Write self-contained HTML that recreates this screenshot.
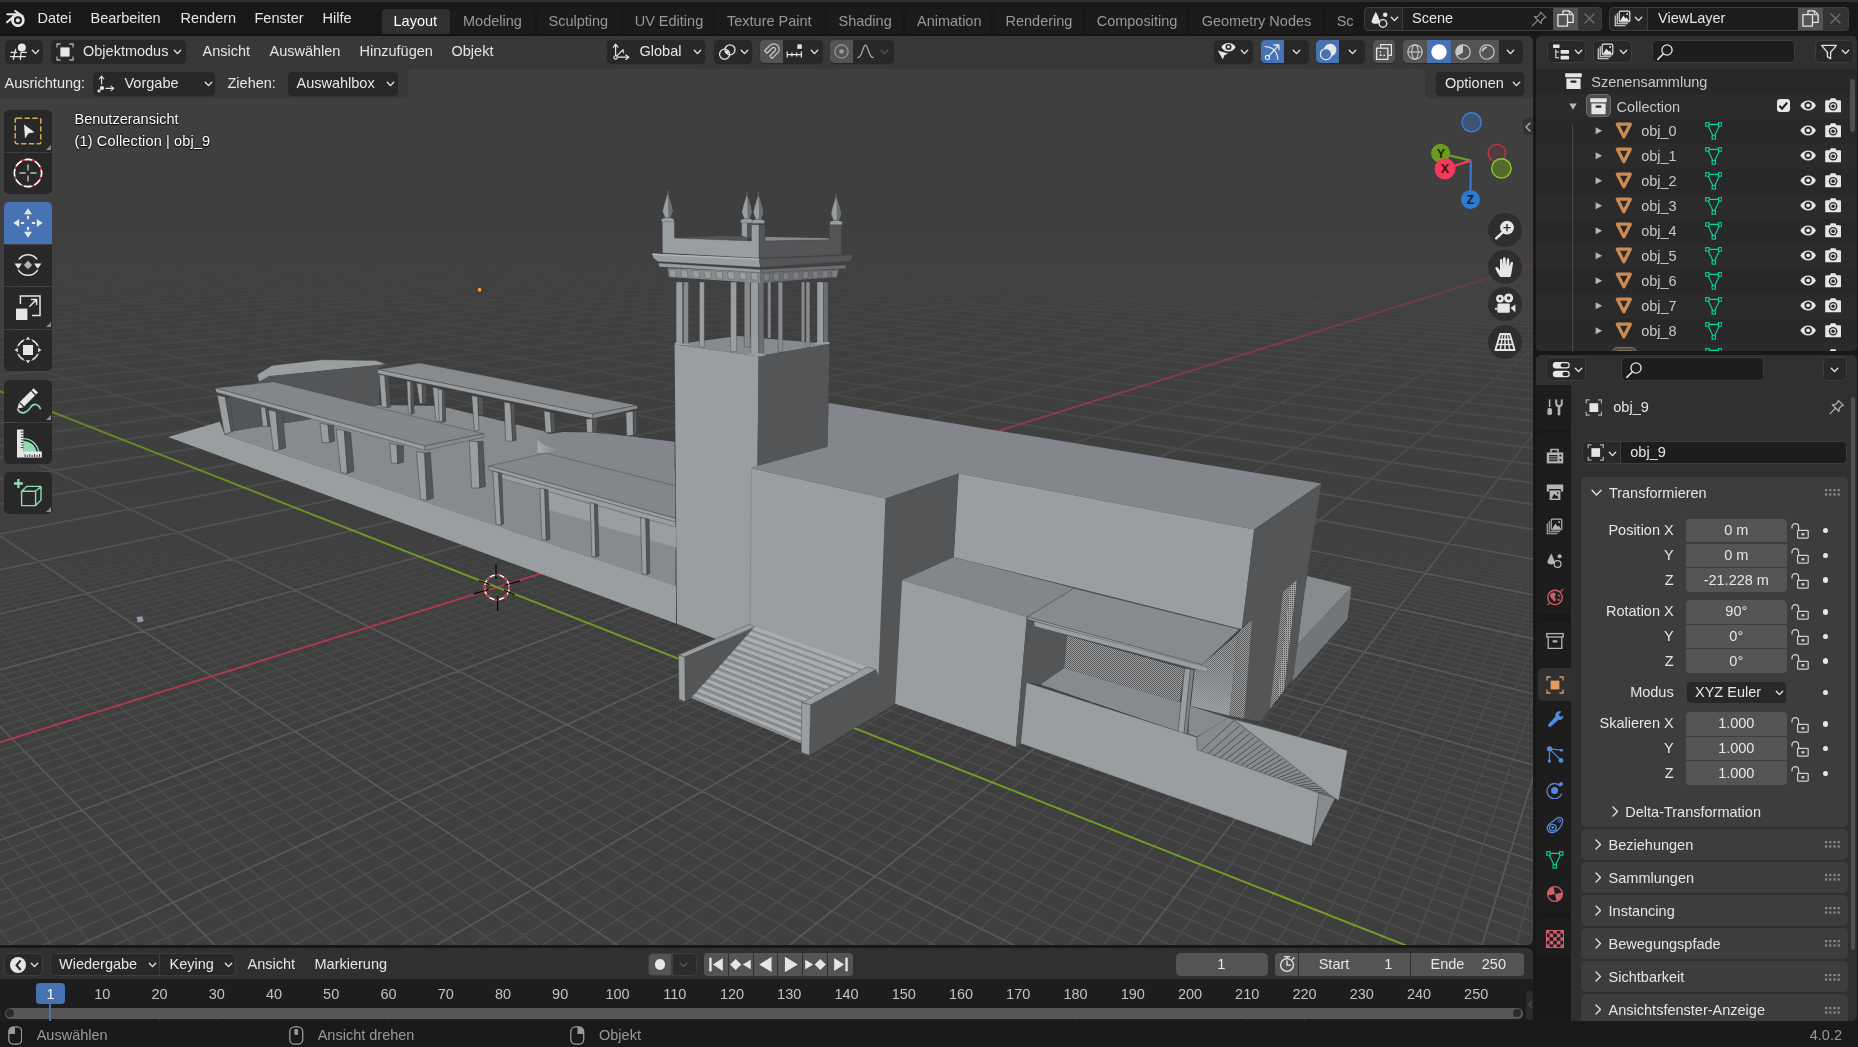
<!DOCTYPE html>
<html><head><meta charset="utf-8"><title>Blender</title>
<style>
html,body{margin:0;padding:0;overflow:hidden;}
body{width:1858px;height:1047px;background:#181818;overflow:hidden;position:relative;font-family:"Liberation Sans",sans-serif;font-size:14.5px;}
body div, body svg{position:absolute;}
</style></head><body>
<div style="left:0px;top:0px;width:1858px;height:2px;background:#2c3036;border-radius:0px;"></div>
<div style="left:0px;top:2px;width:1858px;height:34px;background:#181818;border-radius:0px;"></div>
<div style="left:0px;top:34px;width:1533px;height:2px;background:#131313;border-radius:0px;"></div>
<svg style="left:5.5px;top:10px" width="19" height="17" viewBox="0 0 19 17"><path d="M1.4 4.3H13.5M9.3 1L16.6 6.2M1.1 12.2L7.4 6.6" fill="none" stroke="#e6e6e6" stroke-width="2.1" stroke-linecap="round"/><circle cx="11.9" cy="10.3" r="5.4" fill="#181818" stroke="#e6e6e6" stroke-width="2.8"/><circle cx="11.9" cy="10.3" r="2.1" fill="#e6e6e6"/></svg>
<div style="left:37.5px;top:8px;line-height:20px;height:20px;color:#e6e6e6;white-space:pre;opacity:.999;">Datei</div>
<div style="left:90.5px;top:8px;line-height:20px;height:20px;color:#e6e6e6;white-space:pre;opacity:.999;">Bearbeiten</div>
<div style="left:180.5px;top:8px;line-height:20px;height:20px;color:#e6e6e6;white-space:pre;opacity:.999;">Rendern</div>
<div style="left:254.5px;top:8px;line-height:20px;height:20px;color:#e6e6e6;white-space:pre;opacity:.999;">Fenster</div>
<div style="left:322.5px;top:8px;line-height:20px;height:20px;color:#e6e6e6;white-space:pre;opacity:.999;">Hilfe</div>
<div style="left:382.0px;top:9px;width:67.5px;height:25px;background:#303030;border-radius:4px 4px 0 0;"></div>
<div style="left:393.5px;top:11px;line-height:20px;height:20px;color:#ffffff;white-space:pre;opacity:.999;">Layout</div>
<div style="left:452.0px;top:9px;width:81.5px;height:25px;background:#1b1b1b;border-radius:4px 4px 0 0;"></div>
<div style="left:463px;top:11px;line-height:20px;height:20px;color:#989898;white-space:pre;opacity:.999;">Modeling</div>
<div style="left:537.5px;top:9px;width:82.0px;height:25px;background:#1b1b1b;border-radius:4px 4px 0 0;"></div>
<div style="left:548.5px;top:11px;line-height:20px;height:20px;color:#989898;white-space:pre;opacity:.999;">Sculpting</div>
<div style="left:623.7px;top:9px;width:87.79999999999995px;height:25px;background:#1b1b1b;border-radius:4px 4px 0 0;"></div>
<div style="left:634.7px;top:11px;line-height:20px;height:20px;color:#989898;white-space:pre;opacity:.999;">UV Editing</div>
<div style="left:716.0px;top:9px;width:107.20000000000005px;height:25px;background:#1b1b1b;border-radius:4px 4px 0 0;"></div>
<div style="left:727px;top:11px;line-height:20px;height:20px;color:#989898;white-space:pre;opacity:.999;">Texture Paint</div>
<div style="left:827.5px;top:9px;width:74.5px;height:25px;background:#1b1b1b;border-radius:4px 4px 0 0;"></div>
<div style="left:838.5px;top:11px;line-height:20px;height:20px;color:#989898;white-space:pre;opacity:.999;">Shading</div>
<div style="left:906.0px;top:9px;width:84.20000000000005px;height:25px;background:#1b1b1b;border-radius:4px 4px 0 0;"></div>
<div style="left:917px;top:11px;line-height:20px;height:20px;color:#989898;white-space:pre;opacity:.999;">Animation</div>
<div style="left:994.5px;top:9px;width:87.0px;height:25px;background:#1b1b1b;border-radius:4px 4px 0 0;"></div>
<div style="left:1005.5px;top:11px;line-height:20px;height:20px;color:#989898;white-space:pre;opacity:.999;">Rendering</div>
<div style="left:1085.7px;top:9px;width:100.79999999999995px;height:25px;background:#1b1b1b;border-radius:4px 4px 0 0;"></div>
<div style="left:1096.7px;top:11px;line-height:20px;height:20px;color:#989898;white-space:pre;opacity:.999;">Compositing</div>
<div style="left:1190.7px;top:9px;width:130.79999999999995px;height:25px;background:#1b1b1b;border-radius:4px 4px 0 0;"></div>
<div style="left:1201.7px;top:11px;line-height:20px;height:20px;color:#989898;white-space:pre;opacity:.999;">Geometry Nodes</div>
<div style="left:1325.7px;top:9px;width:84.79999999999995px;height:25px;background:#1b1b1b;border-radius:4px 4px 0 0;"></div>
<div style="left:1336.7px;top:11px;line-height:20px;height:20px;color:#989898;white-space:pre;opacity:.999;">Scripting</div>
<div style="left:1353px;top:2px;width:505px;height:34px;background:#181818;border-radius:0px;"></div>
<div style="left:1363.5px;top:6.5px;width:238.5px;height:24px;background:#1d1d1d;border-radius:4.5px;border:1px solid #3d3d3d;box-sizing:border-box;"></div>
<div style="left:1363.5px;top:6.5px;width:39px;height:24px;background:#262626;border-radius:4.5px 0 0 4.5px;border:1px solid #3d3d3d;box-sizing:border-box;"></div>
<svg style="left:1369.5px;top:9.5px" width="19" height="19" viewBox="0 0 17 17"><path d="M5.2 1.5C6.6 4.5 8.6 8 8.8 10.6C8.8 13 1.4 13 1.4 10.6C1.6 8 3.8 4.5 5.2 1.5Z" fill="#e6e6e6"/><circle cx="11.6" cy="12" r="3.4" fill="#282828" stroke="#e6e6e6" stroke-width="1.3"/><circle cx="13.6" cy="4.3" r="2" fill="#e6e6e6"/></svg>
<svg style="left:1389.5px;top:15px" width="9" height="8" viewBox="0 0 9 8"><path d="M1.3 2.3L4.5 5.6L7.7 2.3" fill="none" stroke="#e6e6e6" stroke-linecap="round" stroke-linejoin="round" stroke-width="1.35"/></svg>
<div style="left:1412px;top:8px;line-height:20px;height:20px;color:#e6e6e6;white-space:pre;opacity:.999;">Scene</div>
<svg style="left:1530px;top:10px" width="18" height="18" viewBox="0 0 18 18"><path d="M10.6 2.2L15.8 7.4L13.9 8L11.4 10.5L11.3 13.6L4.4 6.7L7.5 6.6L10 4.1Z M7.8 10.2L2.2 15.8" fill="none" stroke="#8a8a8a" stroke-linecap="round" stroke-linejoin="round" stroke-width="1.2"/></svg>
<div style="left:1552.5px;top:6.5px;width:25px;height:24px;background:#545454;border-radius:0px;border-top:1px solid #3d3d3d;border-bottom:1px solid #3d3d3d;box-sizing:border-box;"></div>
<svg style="left:1556.5px;top:10px" width="17" height="17" viewBox="0 0 17 17"><path d="M6 .9H12.4L16.1 4.6V12.4H6Z" fill="none" stroke="#e6e6e6" stroke-width="1.3" stroke-linejoin="round"/><path d="M12.2 1.1V4.8H15.9" fill="none" stroke="#e6e6e6" stroke-width="1.1"/><rect x=".9" y="4.6" width="9.6" height="11.5" fill="#545454" stroke="#e6e6e6" stroke-width="1.3" stroke-linejoin="round"/></svg>
<div style="left:1577.5px;top:6.5px;width:24.5px;height:24px;background:#333333;border-radius:0 4.5px 4.5px 0;border:1px solid #3d3d3d;border-left:none;box-sizing:border-box;"></div>
<svg style="left:1584px;top:13px" width="11" height="11" viewBox="0 0 11 11"><path d="M1 1L10 10M10 1L1 10" fill="none" stroke="#6e6e6e" stroke-linecap="round" stroke-linejoin="round" stroke-width="1.4"/></svg>
<div style="left:1609px;top:6.5px;width:239.5px;height:24px;background:#1d1d1d;border-radius:4.5px;border:1px solid #3d3d3d;box-sizing:border-box;"></div>
<div style="left:1609px;top:6.5px;width:39px;height:24px;background:#262626;border-radius:4.5px 0 0 4.5px;border:1px solid #3d3d3d;box-sizing:border-box;"></div>
<svg style="left:1614px;top:10px" width="17" height="17" viewBox="0 0 17 17"><rect x="5.2" y="1.2" width="10.6" height="10.6" rx="1.2" fill="none" stroke="#e6e6e6" stroke-width="1.2"/><path d="M6 11L9.4 5.6L11.6 8.6L12.8 7.4L15 11Z" fill="#e6e6e6"/><circle cx="13.2" cy="4" r="1" fill="#e6e6e6"/><path d="M3.2 3.6V13.8H13.4M1.2 5.8V15.8H11.2" fill="none" stroke="#e6e6e6" stroke-linecap="round" stroke-linejoin="round" stroke-width="1.1"/></svg>
<svg style="left:1634px;top:15px" width="9" height="8" viewBox="0 0 9 8"><path d="M1.3 2.3L4.5 5.6L7.7 2.3" fill="none" stroke="#e6e6e6" stroke-linecap="round" stroke-linejoin="round" stroke-width="1.35"/></svg>
<div style="left:1658px;top:8px;line-height:20px;height:20px;color:#e6e6e6;white-space:pre;opacity:.999;">ViewLayer</div>
<div style="left:1798px;top:6.5px;width:25px;height:24px;background:#545454;border-radius:0px;border-top:1px solid #3d3d3d;border-bottom:1px solid #3d3d3d;box-sizing:border-box;"></div>
<svg style="left:1802px;top:10px" width="17" height="17" viewBox="0 0 17 17"><path d="M6 .9H12.4L16.1 4.6V12.4H6Z" fill="none" stroke="#e6e6e6" stroke-width="1.3" stroke-linejoin="round"/><path d="M12.2 1.1V4.8H15.9" fill="none" stroke="#e6e6e6" stroke-width="1.1"/><rect x=".9" y="4.6" width="9.6" height="11.5" fill="#545454" stroke="#e6e6e6" stroke-width="1.3" stroke-linejoin="round"/></svg>
<div style="left:1823px;top:6.5px;width:25.5px;height:24px;background:#333333;border-radius:0 4.5px 4.5px 0;border:1px solid #3d3d3d;border-left:none;box-sizing:border-box;"></div>
<svg style="left:1830px;top:13px" width="11" height="11" viewBox="0 0 11 11"><path d="M1 1L10 10M10 1L1 10" fill="none" stroke="#6e6e6e" stroke-linecap="round" stroke-linejoin="round" stroke-width="1.4"/></svg>
<div style="left:0;top:36px;width:1533px;height:909px;background:#3f3f3f;border-radius:0 6px 5px 0;overflow:hidden;">
<svg style="left:0;top:0" width="1533" height="909" viewBox="0 36 1533 909"><defs><linearGradient id="gf" x1="0" y1="455" x2="0" y2="945" gradientUnits="userSpaceOnUse"><stop offset="0.000" stop-color="#fff" stop-opacity="0"/><stop offset="0.112" stop-color="#fff" stop-opacity="0.06"/><stop offset="0.255" stop-color="#fff" stop-opacity="0.45"/><stop offset="0.500" stop-color="#fff" stop-opacity="0.85"/><stop offset="1.000" stop-color="#fff" stop-opacity="1"/></linearGradient><linearGradient id="gm" x1="0" y1="225" x2="0" y2="620" gradientUnits="userSpaceOnUse"><stop offset="0.000" stop-color="#fff" stop-opacity="0"/><stop offset="0.089" stop-color="#fff" stop-opacity="0.09"/><stop offset="0.190" stop-color="#fff" stop-opacity="0.17"/><stop offset="0.316" stop-color="#fff" stop-opacity="0.27"/><stop offset="0.443" stop-color="#fff" stop-opacity="0.38"/><stop offset="0.696" stop-color="#fff" stop-opacity="0.66"/><stop offset="1.000" stop-color="#fff" stop-opacity="1"/></linearGradient><linearGradient id="ga" x1="0" y1="215" x2="0" y2="650" gradientUnits="userSpaceOnUse"><stop offset="0.000" stop-color="#fff" stop-opacity="0"/><stop offset="0.108" stop-color="#fff" stop-opacity="0.2"/><stop offset="0.195" stop-color="#fff" stop-opacity="0.42"/><stop offset="0.425" stop-color="#fff" stop-opacity="0.68"/><stop offset="0.701" stop-color="#fff" stop-opacity="0.9"/><stop offset="1.000" stop-color="#fff" stop-opacity="1"/></linearGradient><mask id="ma" maskUnits="userSpaceOnUse" x="0" y="36" width="1533" height="909"><rect x="0" y="36" width="1533" height="909" fill="url(#ga)"/></mask><mask id="mf" maskUnits="userSpaceOnUse" x="0" y="36" width="1533" height="909"><rect x="0" y="36" width="1533" height="909" fill="url(#gf)"/></mask><mask id="mm" maskUnits="userSpaceOnUse" x="0" y="36" width="1533" height="909"><rect x="0" y="36" width="1533" height="909" fill="url(#gm)"/></mask><pattern id="st" width="2" height="2" patternUnits="userSpaceOnUse"><rect width="2" height="2" fill="#9a9fa1"/><rect width="1" height="1" fill="#58595b"/><rect x="1" y="1" width="1" height="1" fill="#58595b"/></pattern><pattern id="st2" width="2" height="2" patternUnits="userSpaceOnUse"><rect width="2" height="2" fill="#9a9fa1"/><rect width="1" height="1" fill="#4e4f51"/></pattern><linearGradient id="stg" x1="1215" y1="650" x2="1208" y2="712" gradientUnits="userSpaceOnUse"><stop offset="0" stop-color="#9a9fa1" stop-opacity="0.1"/><stop offset="1" stop-color="#9a9fa1" stop-opacity="0.9"/></linearGradient><linearGradient id="dg" x1="537" y1="0" x2="558" y2="0" gradientUnits="userSpaceOnUse"><stop offset="0" stop-color="#a6abad"/><stop offset="1" stop-color="#86898c"/></linearGradient></defs><g mask="url(#mf)"><path d="M1524.8 455.0L1535.0 456.4M1512.7 455.0L1535.0 458.0M1500.6 455.0L1535.0 459.6M1488.5 455.0L1535.0 461.3M1476.4 455.0L1535.0 463.0M1452.1 455.0L1535.0 466.5M1439.9 455.0L1535.0 468.2M1427.7 455.0L1535.0 470.0M1415.5 455.0L1535.0 471.9M1403.3 455.0L1535.0 473.7M1391.0 455.0L1535.0 475.6M1378.8 455.0L1535.0 477.5M1366.5 455.0L1535.0 479.4M1354.2 455.0L1535.0 481.3M1329.6 455.0L1535.0 485.3M1317.2 455.0L1535.0 487.3M1304.9 455.0L1535.0 489.4M1292.5 455.0L1535.0 491.5M1280.1 455.0L1535.0 493.6M1267.7 455.0L1535.0 495.8M1255.3 455.0L1535.0 498.0M1242.8 455.0L1535.0 500.2M1230.4 455.0L1535.0 502.5M1205.4 455.0L1535.0 507.1M1192.9 455.0L1535.0 509.5M1180.3 455.0L1535.0 511.9M1167.8 455.0L1535.0 514.3M1155.2 455.0L1535.0 516.8M1142.7 455.0L1535.0 519.3M1130.1 455.0L1535.0 521.9M1117.4 455.0L1535.0 524.5M1104.8 455.0L1535.0 527.1M1079.5 455.0L1535.0 532.6M1066.8 455.0L1535.0 535.4M1054.1 455.0L1535.0 538.2M1041.4 455.0L1535.0 541.1M1028.6 455.0L1535.0 544.0M1015.9 455.0L1535.0 547.0M1003.1 455.0L1535.0 550.1M990.3 455.0L1535.0 553.2M977.5 455.0L1535.0 556.3M951.9 455.0L1535.0 562.8M939.0 455.0L1535.0 566.2M926.1 455.0L1535.0 569.6M913.2 455.0L1535.0 573.0M900.3 455.0L1535.0 576.6M887.4 455.0L1535.0 580.2M874.4 455.0L1535.0 583.9M861.5 455.0L1535.0 587.6M848.5 455.0L1535.0 591.4M822.4 455.0L1535.0 599.3M809.4 455.0L1535.0 603.4M796.3 455.0L1535.0 607.5M783.3 455.0L1535.0 611.8M770.2 455.0L1535.0 616.1M757.1 455.0L1535.0 620.5M743.9 455.0L1535.0 625.0M730.8 455.0L1535.0 629.6M717.6 455.0L1535.0 634.4M691.2 455.0L1535.0 644.1M678.0 455.0L1535.0 649.2M664.8 455.0L1535.0 654.4M651.5 455.0L1535.0 659.7M638.2 455.0L1535.0 665.1M624.9 455.0L1535.0 670.6M611.6 455.0L1535.0 676.3M598.3 455.0L1535.0 682.2M584.9 455.0L1535.0 688.1M558.2 455.0L1535.0 700.6M544.7 455.0L1535.0 707.0M531.3 455.0L1535.0 713.6M517.9 455.0L1535.0 720.4M504.4 455.0L1535.0 727.4M490.9 455.0L1535.0 734.6M477.4 455.0L1535.0 742.0M463.9 455.0L1535.0 749.6M450.3 455.0L1535.0 757.4M423.2 455.0L1535.0 773.7M409.6 455.0L1535.0 782.3M396.0 455.0L1535.0 791.1M382.3 455.0L1535.0 800.1M368.7 455.0L1535.0 809.5M355.0 455.0L1535.0 819.2M341.3 455.0L1535.0 829.1M327.6 455.0L1535.0 839.4M313.8 455.0L1535.0 850.1M286.3 455.0L1535.0 872.5M272.5 455.0L1535.0 884.3M258.7 455.0L1535.0 896.5M244.8 455.0L1535.0 909.2M231.0 455.0L1535.0 922.4M217.1 455.0L1535.0 936.0M203.2 455.0L1526.4 947.0M189.3 455.0L1487.6 947.0M175.4 455.0L1448.8 947.0M147.4 455.0L1370.9 947.0M133.4 455.0L1331.9 947.0M119.4 455.0L1292.9 947.0M105.4 455.0L1253.8 947.0M91.3 455.0L1214.6 947.0M77.2 455.0L1175.4 947.0M63.1 455.0L1136.1 947.0M49.0 455.0L1096.7 947.0M34.9 455.0L1057.3 947.0M6.5 455.0L978.4 947.0M-2.0 457.9L938.8 947.0M-2.0 465.6L899.2 947.0M-2.0 473.7L859.5 947.0M-2.0 482.4L819.7 947.0M-2.0 491.5L779.9 947.0M-2.0 501.2L740.1 947.0M-2.0 511.6L700.2 947.0M-2.0 522.7L660.2 947.0M-2.0 547.3L580.1 947.0M-2.0 561.0L539.9 947.0M-2.0 575.8L499.7 947.0M-2.0 591.8L459.4 947.0M-2.0 609.2L419.1 947.0M-2.0 628.1L378.7 947.0M-2.0 648.8L338.3 947.0M-2.0 671.6L297.8 947.0M-2.0 696.7L257.2 947.0M-2.0 755.6L175.9 947.0M-2.0 790.5L135.1 947.0M-2.0 830.0L94.3 947.0M-2.0 875.0L53.5 947.0M-2.0 926.7L12.6 947.0M1515.6 947.0L1535.0 871.9M1447.0 947.0L1535.0 696.6M1412.7 947.0L1535.0 639.7M1378.3 947.0L1535.0 594.6M1343.9 947.0L1535.0 558.1M1309.4 947.0L1535.0 527.8M1274.9 947.0L1535.0 502.4M1240.3 947.0L1535.0 480.7M1205.7 947.0L1535.0 462.0M1171.1 947.0L1528.2 455.0M1101.7 947.0L1505.2 455.0M1066.9 947.0L1493.6 455.0M1032.1 947.0L1482.1 455.0M997.2 947.0L1470.5 455.0M962.3 947.0L1458.9 455.0M927.3 947.0L1447.3 455.0M892.3 947.0L1435.6 455.0M857.3 947.0L1424.0 455.0M822.2 947.0L1412.4 455.0M751.8 947.0L1389.0 455.0M716.6 947.0L1377.3 455.0M681.3 947.0L1365.6 455.0M646.0 947.0L1353.8 455.0M610.6 947.0L1342.1 455.0M575.2 947.0L1330.3 455.0M539.8 947.0L1318.6 455.0M504.3 947.0L1306.8 455.0M468.7 947.0L1295.0 455.0M397.5 947.0L1271.3 455.0M361.8 947.0L1259.4 455.0M326.0 947.0L1247.6 455.0M290.3 947.0L1235.7 455.0M254.4 947.0L1223.8 455.0M218.6 947.0L1211.9 455.0M182.6 947.0L1200.0 455.0M146.7 947.0L1188.0 455.0M110.7 947.0L1176.0 455.0M38.5 947.0L1152.1 455.0M2.3 947.0L1140.1 455.0M-2.0 933.5L1128.0 455.0M-2.0 918.7L1116.0 455.0M-2.0 904.6L1103.9 455.0M-2.0 890.9L1091.9 455.0M-2.0 877.8L1079.8 455.0M-2.0 865.1L1067.7 455.0M-2.0 852.9L1055.6 455.0M-2.0 829.8L1031.3 455.0M-2.0 818.8L1019.1 455.0M-2.0 808.2L1006.9 455.0M-2.0 797.9L994.7 455.0M-2.0 788.0L982.5 455.0M-2.0 778.4L970.3 455.0M-2.0 769.1L958.0 455.0M-2.0 760.1L945.8 455.0M-2.0 751.3L933.5 455.0M-2.0 734.6L908.9 455.0M-2.0 726.7L896.6 455.0M-2.0 718.9L884.2 455.0M-2.0 711.4L871.9 455.0M-2.0 704.0L859.5 455.0M-2.0 696.9L847.1 455.0M-2.0 690.0L834.7 455.0M-2.0 683.2L822.2 455.0M-2.0 676.7L809.8 455.0M-2.0 664.0L784.9 455.0M-2.0 658.0L772.4 455.0M-2.0 652.0L759.9 455.0M-2.0 646.3L747.3 455.0M-2.0 640.6L734.8 455.0M-2.0 635.2L722.2 455.0M-2.0 629.8L709.7 455.0M-2.0 624.6L697.1 455.0M-2.0 619.4L684.5 455.0M-2.0 609.6L659.2 455.0M-2.0 604.8L646.5 455.0M-2.0 600.1L633.9 455.0M-2.0 595.6L621.2 455.0M-2.0 591.1L608.4 455.0M-2.0 586.7L595.7 455.0M-2.0 582.5L583.0 455.0M-2.0 578.3L570.2 455.0M-2.0 574.2L557.4 455.0M-2.0 566.2L531.8 455.0M-2.0 562.4L519.0 455.0M-2.0 558.6L506.1 455.0M-2.0 554.9L493.3 455.0M-2.0 551.3L480.4 455.0M-2.0 547.8L467.5 455.0M-2.0 544.3L454.6 455.0M-2.0 540.9L441.6 455.0M-2.0 537.5L428.7 455.0M-2.0 531.0L402.7 455.0M-2.0 527.8L389.7 455.0M-2.0 524.7L376.7 455.0M-2.0 521.7L363.6 455.0M-2.0 518.7L350.6 455.0M-2.0 515.7L337.5 455.0M-2.0 512.8L324.4 455.0M-2.0 510.0L311.3 455.0M-2.0 507.2L298.2 455.0M-2.0 501.7L271.9 455.0M-2.0 499.1L258.7 455.0M-2.0 496.5L245.5 455.0M-2.0 493.9L232.2 455.0M-2.0 491.4L219.0 455.0M-2.0 488.9L205.7 455.0M-2.0 486.4L192.5 455.0M-2.0 484.0L179.2 455.0M-2.0 481.7L165.9 455.0M-2.0 477.0L139.2 455.0M-2.0 474.8L125.8 455.0M-2.0 472.6L112.4 455.0M-2.0 470.4L99.0 455.0M-2.0 468.2L85.6 455.0M-2.0 466.1L72.2 455.0M-2.0 464.0L58.7 455.0M-2.0 462.0L45.2 455.0M-2.0 459.9L31.7 455.0M-2.0 456.0L4.7 455.0" stroke="#4d4d4d" stroke-width="1.6" fill="none" opacity="1"/></g><g mask="url(#mm)"><path d="M583.4 205.0L1535.0 226.6M581.2 205.0L1535.0 226.7M579.0 205.0L1535.0 226.8M576.8 205.0L1535.0 226.9M574.6 205.0L1535.0 226.9M572.4 205.0L1535.0 227.0M570.1 205.0L1535.0 227.1M567.9 205.0L1535.0 227.2M565.6 205.0L1535.0 227.3M563.3 205.0L1535.0 227.4M561.1 205.0L1535.0 227.5M558.7 205.0L1535.0 227.6M556.4 205.0L1535.0 227.7M554.1 205.0L1535.0 227.8M551.7 205.0L1535.0 227.9M549.4 205.0L1535.0 228.0M547.0 205.0L1535.0 228.2M544.6 205.0L1535.0 228.3M542.2 205.0L1535.0 228.4M539.8 205.0L1535.0 228.5M537.4 205.0L1535.0 228.6M534.9 205.0L1535.0 228.7M532.4 205.0L1535.0 228.8M530.0 205.0L1535.0 228.9M527.5 205.0L1535.0 229.0M524.9 205.0L1535.0 229.2M522.4 205.0L1535.0 229.3M519.9 205.0L1535.0 229.4M517.3 205.0L1535.0 229.5M514.7 205.0L1535.0 229.6M512.1 205.0L1535.0 229.8M509.5 205.0L1535.0 229.9M506.9 205.0L1535.0 230.0M504.2 205.0L1535.0 230.1M501.6 205.0L1535.0 230.3M498.9 205.0L1535.0 230.4M496.2 205.0L1535.0 230.5M493.5 205.0L1535.0 230.7M490.7 205.0L1535.0 230.8M488.0 205.0L1535.0 231.0M485.2 205.0L1535.0 231.1M482.4 205.0L1535.0 231.2M479.6 205.0L1535.0 231.4M476.8 205.0L1535.0 231.5M473.9 205.0L1535.0 231.7M471.0 205.0L1535.0 231.8M468.2 205.0L1535.0 232.0M465.2 205.0L1535.0 232.1M462.3 205.0L1535.0 232.3M459.4 205.0L1535.0 232.4M456.4 205.0L1535.0 232.6M453.4 205.0L1535.0 232.7M450.4 205.0L1535.0 232.9M447.4 205.0L1535.0 233.1M444.3 205.0L1535.0 233.2M441.3 205.0L1535.0 233.4M438.2 205.0L1535.0 233.6M435.0 205.0L1535.0 233.7M431.9 205.0L1535.0 233.9M428.7 205.0L1535.0 234.1M425.6 205.0L1535.0 234.3M422.3 205.0L1535.0 234.5M419.1 205.0L1535.0 234.6M415.9 205.0L1535.0 234.8M412.6 205.0L1535.0 235.0M409.3 205.0L1535.0 235.2M406.0 205.0L1535.0 235.4M402.6 205.0L1535.0 235.6M399.2 205.0L1535.0 235.8M395.8 205.0L1535.0 236.0M392.4 205.0L1535.0 236.2M389.0 205.0L1535.0 236.4M385.5 205.0L1535.0 236.7M382.0 205.0L1535.0 236.9M378.4 205.0L1535.0 237.1M374.9 205.0L1535.0 237.3M371.3 205.0L1535.0 237.5M367.7 205.0L1535.0 237.8M364.1 205.0L1535.0 238.0M360.4 205.0L1535.0 238.2M356.7 205.0L1535.0 238.5M353.0 205.0L1535.0 238.7M349.2 205.0L1535.0 239.0M345.4 205.0L1535.0 239.2M341.6 205.0L1535.0 239.5M337.8 205.0L1535.0 239.8M333.9 205.0L1535.0 240.0M330.0 205.0L1535.0 240.3M326.1 205.0L1535.0 240.6M322.1 205.0L1535.0 240.9M318.1 205.0L1535.0 241.1M314.1 205.0L1535.0 241.4M310.0 205.0L1535.0 241.7M305.9 205.0L1535.0 242.0M301.8 205.0L1535.0 242.3M297.6 205.0L1535.0 242.7M293.4 205.0L1535.0 243.0M289.2 205.0L1535.0 243.3M284.9 205.0L1535.0 243.6M280.6 205.0L1535.0 244.0M276.3 205.0L1535.0 244.3M271.9 205.0L1535.0 244.7M267.5 205.0L1535.0 245.0M263.1 205.0L1535.0 245.4M258.6 205.0L1535.0 245.8M254.1 205.0L1535.0 246.1M249.5 205.0L1535.0 246.5M244.9 205.0L1535.0 246.9M240.3 205.0L1535.0 247.3M235.6 205.0L1535.0 247.7M230.8 205.0L1535.0 248.1M226.1 205.0L1535.0 248.6M221.3 205.0L1535.0 249.0M216.4 205.0L1535.0 249.5M211.5 205.0L1535.0 249.9M206.6 205.0L1535.0 250.4M201.6 205.0L1535.0 250.9M196.6 205.0L1535.0 251.3M191.5 205.0L1535.0 251.8M186.4 205.0L1535.0 252.4M181.2 205.0L1535.0 252.9M176.0 205.0L1535.0 253.4M170.8 205.0L1535.0 254.0M165.4 205.0L1535.0 254.5M160.1 205.0L1535.0 255.1M154.7 205.0L1535.0 255.7M149.2 205.0L1535.0 256.3M143.7 205.0L1535.0 256.9M138.1 205.0L1535.0 257.5M132.5 205.0L1535.0 258.2M126.9 205.0L1535.0 258.9M121.1 205.0L1535.0 259.6M115.4 205.0L1535.0 260.3M109.5 205.0L1535.0 261.0M103.6 205.0L1535.0 261.7M97.7 205.0L1535.0 262.5M91.7 205.0L1535.0 263.3M85.6 205.0L1535.0 264.1M79.5 205.0L1535.0 265.0M73.3 205.0L1535.0 265.8M67.0 205.0L1535.0 266.7M60.7 205.0L1535.0 267.6M54.3 205.0L1535.0 268.6M47.9 205.0L1535.0 269.6M41.4 205.0L1535.0 270.6M34.8 205.0L1535.0 271.6M28.1 205.0L1535.0 272.7M21.4 205.0L1535.0 273.8M14.6 205.0L1535.0 275.0M7.8 205.0L1535.0 276.2M0.8 205.0L1535.0 277.4M-2.0 205.2L1535.0 278.7M-2.0 205.5L1535.0 280.1M-2.0 205.9L1535.0 281.5M-2.0 206.3L1535.0 282.9M-2.0 206.7L1535.0 284.4M-2.0 207.1L1535.0 286.0M-2.0 207.5L1535.0 287.6M-2.0 207.9L1535.0 289.3M-2.0 208.4L1535.0 291.1M-2.0 208.9L1535.0 292.9M-2.0 209.4L1535.0 294.9M-2.0 209.9L1535.0 296.9M-2.0 210.4L1535.0 299.0M-2.0 211.0L1535.0 301.2M-2.0 211.6L1535.0 303.6M-2.0 212.3L1535.0 306.0M-2.0 212.9L1535.0 308.6M-2.0 213.6L1535.0 311.4M-2.0 214.4L1535.0 314.3M-2.0 215.2L1535.0 317.3M-2.0 216.0L1535.0 320.5M-2.0 216.9L1535.0 324.0M-2.0 217.8L1535.0 327.6M-2.0 218.8L1535.0 331.5M-2.0 219.9L1535.0 335.6M-2.0 221.0L1535.0 340.1M-2.0 222.3L1535.0 344.8M-2.0 223.6L1535.0 349.9M-2.0 225.0L1535.0 355.4M-2.0 226.5L1535.0 361.3M-2.0 228.2L1535.0 367.8M-2.0 230.0L1535.0 374.8M-2.0 232.0L1535.0 382.4M-2.0 234.2L1535.0 390.8M-2.0 236.5L1535.0 400.0M-2.0 239.2L1535.0 410.2M-2.0 242.1L1535.0 421.5M-2.0 245.4L1535.0 434.2M-2.0 249.1L1535.0 448.5M-2.0 253.3L1535.0 464.7M-2.0 258.1L1535.0 483.3M-2.0 263.6L1535.0 504.8M-2.0 270.1L1535.0 529.8M-2.0 277.8L1535.0 559.6M-2.0 287.0L1535.0 595.3M-2.0 298.3L1535.0 639.2M-2.0 312.6L1535.0 694.3M-2.0 331.0L1535.0 765.5M-2.0 355.7L1535.0 861.1M-2.0 443.8L1017.9 947.0M-2.0 534.6L620.2 947.0M-2.0 724.5L216.6 947.0M1481.3 947.0L1535.0 770.9M1136.4 947.0L1535.0 431.4M787.0 947.0L1535.0 347.3M433.1 947.0L1535.0 309.2M74.6 947.0L1535.0 287.5M-2.0 841.1L1535.0 273.4M-2.0 670.3L1535.0 256.3M-2.0 614.4L1535.0 250.8M-2.0 570.2L1535.0 246.3M-2.0 534.2L1535.0 242.7M-2.0 504.4L1535.0 239.8M-2.0 479.3L1535.0 237.2M-2.0 457.9L1535.0 235.1M-2.0 439.4L1535.0 233.3M-2.0 423.3L1535.0 231.6M-2.0 409.1L1535.0 230.2M-2.0 396.5L1535.0 229.0M-2.0 385.3L1535.0 227.8M-2.0 375.2L1535.0 226.8M-2.0 366.1L1535.0 225.9M-2.0 357.8L1535.0 225.1M-2.0 350.3L1535.0 224.3M-2.0 343.4L1535.0 223.6M-2.0 337.0L1535.0 223.0M-2.0 331.2L1535.0 222.4M-2.0 325.8L1535.0 221.9M-2.0 320.8L1535.0 221.4M-2.0 316.1L1535.0 220.9M-2.0 311.7L1535.0 220.5M-2.0 307.7L1535.0 220.1M-2.0 303.8L1535.0 219.7M-2.0 300.3L1535.0 219.3M-2.0 296.9L1535.0 219.0M-2.0 293.7L1535.0 218.7M-2.0 290.7L1535.0 218.4M-2.0 287.9L1535.0 218.1M-2.0 285.2L1535.0 217.8M-2.0 282.7L1535.0 217.6M-2.0 280.3L1535.0 217.3M-2.0 278.0L1535.0 217.1M-2.0 275.8L1535.0 216.9M-2.0 273.7L1535.0 216.7M-2.0 271.7L1535.0 216.5M-2.0 269.8L1535.0 216.3M-2.0 268.0L1535.0 216.1M-2.0 266.3L1535.0 215.9M-2.0 264.6L1535.0 215.8M-2.0 263.0L1535.0 215.6M-2.0 261.5L1535.0 215.4M-2.0 260.0L1535.0 215.3M-2.0 258.6L1535.0 215.2M-2.0 257.2L1535.0 215.0M-2.0 255.9L1535.0 214.9M-2.0 254.6L1535.0 214.8M-2.0 253.4L1535.0 214.6M-2.0 252.3L1535.0 214.5M-2.0 251.1L1535.0 214.4M-2.0 250.0L1535.0 214.3M-2.0 249.0L1535.0 214.2M-2.0 247.9L1535.0 214.1M-2.0 247.0L1535.0 214.0M-2.0 246.0L1535.0 213.9M-2.0 245.1L1535.0 213.8M-2.0 244.2L1535.0 213.7M-2.0 243.3L1535.0 213.6M-2.0 242.5L1535.0 213.5M-2.0 241.6L1535.0 213.5M-2.0 240.8L1535.0 213.4M-2.0 240.1L1535.0 213.3M-2.0 239.3L1535.0 213.2M-2.0 238.6L1535.0 213.2M-2.0 237.9L1535.0 213.1M-2.0 237.2L1535.0 213.0M-2.0 236.5L1535.0 213.0M-2.0 235.8L1535.0 212.9M-2.0 235.2L1535.0 212.8M-2.0 234.6L1535.0 212.8M-2.0 234.0L1535.0 212.7M-2.0 233.4L1535.0 212.6M-2.0 232.8L1535.0 212.6M-2.0 232.3L1535.0 212.5M-2.0 231.7L1535.0 212.5M-2.0 231.2L1535.0 212.4M-2.0 230.6L1535.0 212.4M-2.0 230.1L1535.0 212.3M-2.0 229.6L1535.0 212.3M-2.0 229.1L1535.0 212.2M-2.0 228.7L1535.0 212.2M-2.0 228.2L1535.0 212.1M-2.0 227.8L1535.0 212.1M-2.0 227.3L1535.0 212.0M-2.0 226.9L1535.0 212.0M-2.0 226.4L1535.0 211.9M-2.0 226.0L1535.0 211.9M-2.0 225.6L1535.0 211.9M-2.0 225.2L1535.0 211.8M-2.0 224.8L1535.0 211.8M-2.0 224.4L1535.0 211.7M-2.0 224.1L1535.0 211.7M-2.0 223.7L1535.0 211.7M-2.0 223.3L1535.0 211.6M-2.0 223.0L1535.0 211.6M-2.0 222.6L1535.0 211.6M-2.0 222.3L1535.0 211.5M-2.0 222.0L1535.0 211.5M-2.0 221.6L1535.0 211.5M-2.0 221.3L1535.0 211.4M-2.0 221.0L1535.0 211.4M-2.0 220.7L1535.0 211.4M-2.0 220.4L1535.0 211.3M-2.0 220.1L1535.0 211.3M-2.0 219.8L1535.0 211.3M-2.0 219.5L1535.0 211.2M-2.0 219.2L1535.0 211.2M-2.0 218.9L1535.0 211.2M-2.0 218.7L1535.0 211.2" stroke="#585858" stroke-width="1.8" fill="none" opacity="1"/></g><g mask="url(#ma)"><path d="M-2.0 742.9L1535.0 263.6" stroke="#b0384e" stroke-width="1.9"/><path d="M-2.0 390.6L1409.9 947.0" stroke="#74a021" stroke-width="1.9"/></g><path d="M224.9 434.7L233.0 431.2L264.0 426.0L306.0 420.0L379.0 405.0L440.0 406.0L543.9 431.2L560.0 440.0L675.0 470.0L675.0 586.0Z" fill="#888b8e"/><path d="M257.1 374.7L272.0 365.4L322.3 359.7L375.9 360.6L386.9 364.3L268.4 376.5L268.4 380.8L259.0 381.7Z" fill="#999ea0" stroke="#3c3d3f" stroke-width="0.4"/><path d="M268.4 376.5L386.9 364.3L379.5 367.9L379.2 405.2L306.1 420.1L263.9 426.0L233.1 431.2L229.0 397.1Z" fill="#545557"/><path d="M379.2 374.4L384.8 375.3L387.3 407.6L381.6 406.8Z" fill="#999ea0" stroke="#3c3d3f" stroke-width="0.5"/><path d="M384.8 375.3L388.1 376.0L390.8 407.1L387.3 407.6Z" fill="#545557" stroke="#3c3d3f" stroke-width="0.5"/><path d="M406.8 380.8L410.8 381.5L411.3 414.1L408.4 413.6Z" fill="#999ea0" stroke="#3c3d3f" stroke-width="0.5"/><path d="M410.8 381.5L413.6 382.0L414.1 413.6L411.3 414.1Z" fill="#545557" stroke="#3c3d3f" stroke-width="0.5"/><path d="M416.5 383.3L422.2 384.1L422.7 403.6L419.7 403.6Z" fill="#999ea0" stroke="#3c3d3f" stroke-width="0.5"/><path d="M422.2 384.1L426.2 384.4L426.2 403.2L422.7 403.6Z" fill="#545557" stroke="#3c3d3f" stroke-width="0.5"/><path d="M432.7 387.3L439.5 388.6L441.7 422.2L436.0 420.9Z" fill="#999ea0" stroke="#3c3d3f" stroke-width="0.5"/><path d="M439.5 388.6L443.3 389.3L445.2 421.4L441.7 422.2Z" fill="#545557" stroke="#3c3d3f" stroke-width="0.5"/><path d="M438.1 389.0L442.4 389.9L442.9 421.8L439.2 421.4Z" fill="#999ea0" stroke="#3c3d3f" stroke-width="0.5"/><path d="M442.4 389.9L445.2 390.6L445.7 421.1L442.9 421.8Z" fill="#545557" stroke="#3c3d3f" stroke-width="0.5"/><path d="M471.7 395.5L477.7 396.8L479.0 430.7L474.4 430.4Z" fill="#999ea0" stroke="#3c3d3f" stroke-width="0.5"/><path d="M477.7 396.8L483.0 397.7L483.5 414.9L479.0 415.7Z" fill="#545557" stroke="#3c3d3f" stroke-width="0.5"/><path d="M504.1 401.9L510.6 403.2L512.7 441.2L505.7 440.9Z" fill="#999ea0" stroke="#3c3d3f" stroke-width="0.5"/><path d="M510.6 403.2L514.4 403.9L516.3 440.3L512.7 441.2Z" fill="#545557" stroke="#3c3d3f" stroke-width="0.5"/><path d="M543.9 410.9L550.4 412.2L551.7 432.5L545.5 432.8Z" fill="#999ea0" stroke="#3c3d3f" stroke-width="0.5"/><path d="M550.4 412.2L554.0 412.8L555.6 431.7L551.7 432.5Z" fill="#545557" stroke="#3c3d3f" stroke-width="0.5"/><path d="M586.1 419.0L592.6 418.7L592.9 432.5L586.9 432.8Z" fill="#999ea0" stroke="#3c3d3f" stroke-width="0.5"/><path d="M592.6 418.7L597.1 418.2L597.1 431.8L592.9 432.5Z" fill="#545557" stroke="#3c3d3f" stroke-width="0.5"/><path d="M625.9 412.5L633.2 411.0L633.5 435.1L626.7 436.0Z" fill="#999ea0" stroke="#3c3d3f" stroke-width="0.5"/><path d="M633.2 411.0L636.8 410.1L636.8 434.4L633.5 435.1Z" fill="#545557" stroke="#3c3d3f" stroke-width="0.5"/><path d="M377.5 369.5L419.7 363.0L637.2 405.2L592.6 414.1Z" fill="#888b8e" stroke="#3c3d3f" stroke-width="0.4"/><path d="M377.5 369.5L592.6 414.1L593.2 418.6L378.0 373.6Z" fill="#999ea0" stroke="#3c3d3f" stroke-width="0.4"/><path d="M592.6 414.1L637.2 405.2L637.5 408.6L593.2 418.6Z" fill="#888b8e" stroke="#3c3d3f" stroke-width="0.4"/><path d="M537.4 439.3L543.9 434.7L563.4 432.1L592.6 432.5L626.7 436.0L674.6 441.7L674.6 485.6L545.5 453.1L537.4 452.3Z" fill="#83868a"/><path d="M537.4 439.6L537.4 452.6L545.8 453.2L559.3 449.4L550.4 447.4L542.3 443.8Z" fill="url(#dg)"/><path d="M260.6 406.8L265.5 407.6L268.0 426.3L262.6 426.3Z" fill="#999ea0" stroke="#3c3d3f" stroke-width="0.5"/><path d="M265.5 407.6L269.1 408.4L272.0 426.0L268.0 426.3Z" fill="#545557" stroke="#3c3d3f" stroke-width="0.5"/><path d="M319.9 423.1L328.0 424.7L329.6 442.5L322.3 442.5Z" fill="#999ea0" stroke="#3c3d3f" stroke-width="0.5"/><path d="M328.0 424.7L333.7 425.5L334.5 441.2L329.6 442.5Z" fill="#545557" stroke="#3c3d3f" stroke-width="0.5"/><path d="M389.7 443.3L397.0 445.0L397.8 463.6L391.3 462.8Z" fill="#999ea0" stroke="#3c3d3f" stroke-width="0.5"/><path d="M397.0 445.0L403.5 445.8L403.5 462.3L397.8 463.6Z" fill="#545557" stroke="#3c3d3f" stroke-width="0.5"/><path d="M215.2 388.1L273.6 381.7L483.4 433.7L424.8 446.0Z" fill="#83868a" stroke="#3c3d3f" stroke-width="0.4"/><path d="M215.2 388.1L424.8 446.0L425.3 450.3L216.3 392.3Z" fill="#999ea0" stroke="#3c3d3f" stroke-width="0.4"/><path d="M424.8 446.0L483.4 433.7L483.6 437.3L425.3 450.3Z" fill="#888b8e" stroke="#3c3d3f" stroke-width="0.4"/><path d="M168.1 436.9L219.7 421.8L224.9 434.7L676.0 586.0L676.0 623.5Z" fill="#999ea0"/><path d="M217.1 395.1L225.3 397.1L231.4 432.0L224.6 434.4Z" fill="#999ea0" stroke="#3c3d3f" stroke-width="0.5"/><path d="M225.3 397.1L229.8 397.9L233.4 430.7L231.4 432.0Z" fill="#545557" stroke="#3c3d3f" stroke-width="0.5"/><path d="M268.4 409.7L276.1 411.7L279.3 449.8L273.6 451.0Z" fill="#999ea0" stroke="#3c3d3f" stroke-width="0.5"/><path d="M276.1 411.7L282.6 413.3L285.8 447.9L279.3 449.8Z" fill="#545557" stroke="#3c3d3f" stroke-width="0.5"/><path d="M336.1 428.7L344.3 430.8L347.5 473.4L341.0 472.6Z" fill="#999ea0" stroke="#3c3d3f" stroke-width="0.5"/><path d="M344.3 430.8L350.7 432.8L354.0 470.9L347.5 473.4Z" fill="#545557" stroke="#3c3d3f" stroke-width="0.5"/><path d="M416.5 451.5L424.6 453.1L427.0 500.2L420.6 499.4Z" fill="#999ea0" stroke="#3c3d3f" stroke-width="0.5"/><path d="M424.6 453.1L430.3 451.9L433.5 498.1L427.0 500.2Z" fill="#545557" stroke="#3c3d3f" stroke-width="0.5"/><path d="M469.2 440.9L478.1 441.7L479.8 488.0L471.7 488.0Z" fill="#999ea0" stroke="#3c3d3f" stroke-width="0.5"/><path d="M478.1 441.7L483.0 440.9L485.5 486.4L479.8 488.0Z" fill="#545557" stroke="#3c3d3f" stroke-width="0.5"/><path d="M492.0 474.0L675.5 525.0L675.5 586.0L497.0 524.0Z" fill="#888b8e"/><path d="M548.0 491.4L589.4 504.4L590.2 521.4L548.8 510.0Z" fill="#999ea0"/><path d="M598.3 506.0L640.5 519.0L641.3 536.8L598.3 525.5Z" fill="#999ea0"/><path d="M649.4 520.6L676.2 527.1L676.2 547.4L649.4 540.1Z" fill="#999ea0"/><path d="M488.7 466.1L545.5 453.1L675.5 485.8L675.5 518.5Z" fill="#83868a" stroke="#3c3d3f" stroke-width="0.4"/><path d="M488.7 466.1L675.5 518.5L675.5 522.0L489.3 469.8Z" fill="#999ea0" stroke="#3c3d3f" stroke-width="0.4"/><path d="M492.0 471.0L675.5 522.0L675.5 527.0L492.5 476.0Z" fill="#999ea0" stroke="#3c3d3f" stroke-width="0.3"/><path d="M492.8 470.9L498.4 472.6L501.4 525.1L496.0 524.2Z" fill="#999ea0" stroke="#3c3d3f" stroke-width="0.5"/><path d="M498.4 472.6L501.7 473.4L503.6 523.8L501.4 525.1Z" fill="#545557" stroke="#3c3d3f" stroke-width="0.5"/><path d="M539.8 488.1L544.7 488.9L546.3 540.4L541.9 539.7Z" fill="#999ea0" stroke="#3c3d3f" stroke-width="0.5"/><path d="M544.7 488.9L548.0 489.7L550.1 539.3L546.3 540.4Z" fill="#545557" stroke="#3c3d3f" stroke-width="0.5"/><path d="M590.2 502.7L594.5 503.5L595.8 557.1L591.8 556.3Z" fill="#999ea0" stroke="#3c3d3f" stroke-width="0.5"/><path d="M594.5 503.5L597.5 504.4L599.1 556.0L595.8 557.1Z" fill="#545557" stroke="#3c3d3f" stroke-width="0.5"/><path d="M640.5 517.3L645.8 518.6L647.0 574.5L642.1 573.8Z" fill="#999ea0" stroke="#3c3d3f" stroke-width="0.5"/><path d="M645.8 518.6L649.1 519.3L649.9 573.3L647.0 574.5Z" fill="#545557" stroke="#3c3d3f" stroke-width="0.5"/><path d="M751.0 468.2L757.5 465.8L827.4 446.8L828.6 402.9L1321.3 483.5L1254.2 529.4L958.6 473.5L885.5 498.4Z" fill="#83868a"/><path d="M1307.1 576.1L1351.6 587.0L1297.7 644.2L1303.1 599.0Z" fill="#888b8e"/><path d="M1351.6 587.0L1347.4 619.3L1292.2 681.4L1297.7 644.2Z" fill="#737678"/><path d="M958.6 473.5L1254.2 529.4L1241.8 629.3L953.7 557.2Z" fill="#999ea0"/><path d="M1254.2 529.4L1321.3 483.5L1307.6 570.4L1241.8 629.3Z" fill="#545557"/><path d="M885.5 498.4L958.5 474.0L953.7 557.2L902.0 580.2L895.2 703.7L877.5 702.0Z" fill="#545557"/><path d="M674.6 344.5L737.8 336.1L829.4 343.9L758.6 356.2Z" fill="#888b8e"/><path d="M674.6 344.5L758.6 356.2L757.5 465.8L751.0 468.2L885.5 498.4L877.5 702.0L677.0 623.8Z" fill="#999ea0"/><path d="M758.6 356.2L829.4 343.9L827.4 446.8L757.5 465.8Z" fill="#545557"/><path d="M751.5 470.0L749.5 655.0" fill="none" stroke="#7f8386" stroke-width="0.6"/><path d="M767.7 282.0L770.9 282.0L770.9 338.0L767.7 338.0Z" fill="#888b8e" stroke="#3c3d3f" stroke-width="0.35"/><path d="M744.3 282.0L750.1 282.0L750.1 347.0L744.3 347.0Z" fill="#888b8e" stroke="#3c3d3f" stroke-width="0.35"/><path d="M801.4 282.0L804.7 282.0L804.7 342.0L801.4 342.0Z" fill="#888b8e" stroke="#3c3d3f" stroke-width="0.35"/><path d="M676.1 282.0L682.6 282.0L682.6 344.5L676.1 344.5Z" fill="#999ea0" stroke="#3c3d3f" stroke-width="0.35"/><path d="M683.5 282.0L688.4 282.0L688.4 345.5L683.5 345.5Z" fill="#888b8e" stroke="#3c3d3f" stroke-width="0.35"/><path d="M699.5 282.0L704.3 282.0L704.3 347.1L699.5 347.1Z" fill="#999ea0" stroke="#3c3d3f" stroke-width="0.35"/><path d="M730.6 282.0L736.5 282.0L736.5 351.7L730.6 351.7Z" fill="#999ea0" stroke="#3c3d3f" stroke-width="0.35"/><path d="M778.1 282.0L782.6 282.0L782.6 351.7L778.1 351.7Z" fill="#888b8e" stroke="#3c3d3f" stroke-width="0.35"/><path d="M806.0 282.0L809.9 282.0L809.9 347.1L806.0 347.1Z" fill="#888b8e" stroke="#3c3d3f" stroke-width="0.35"/><path d="M817.0 282.0L823.5 282.0L823.5 344.0L817.0 344.0Z" fill="#999ea0" stroke="#3c3d3f" stroke-width="0.35"/><path d="M823.5 282.0L828.1 282.0L828.1 344.0L823.5 344.0Z" fill="#6c6e71" stroke="#3c3d3f" stroke-width="0.35"/><path d="M750.8 282.0L758.6 282.0L758.6 354.9L750.8 354.9Z" fill="#999ea0" stroke="#3c3d3f" stroke-width="0.35"/><path d="M758.6 282.0L763.8 282.0L763.8 354.5L758.6 354.5Z" fill="#6c6e71" stroke="#3c3d3f" stroke-width="0.35"/><path d="M674.8 342.6L689.7 344.3L689.7 345.8L674.8 344.5Z" fill="#999ea0"/><path d="M748.8 353.0L765.1 353.6L765.1 355.6L758.6 356.5L748.8 354.7Z" fill="#999ea0"/><path d="M815.1 342.6L829.4 341.9L829.4 343.9L815.1 344.5Z" fill="#999ea0"/><path d="M667.7 268.3L760.5 271.6L760.5 282.9L669.0 277.1Z" fill="#888b8e"/><path d="M760.5 271.6L839.1 269.6L836.5 277.1L760.5 282.9Z" fill="#6c6e71"/><path d="M669.0 269.6L675.7 269.9L676.1 277.4L670.0 276.8Z" fill="#999ea0" stroke="#3c3d3f" stroke-width="0.3"/><path d="M680.6 270.0L687.4 270.3L687.8 277.8L681.7 277.2Z" fill="#999ea0" stroke="#3c3d3f" stroke-width="0.3"/><path d="M692.3 270.4L699.1 270.7L699.5 278.2L693.4 277.6Z" fill="#999ea0" stroke="#3c3d3f" stroke-width="0.3"/><path d="M704.0 270.9L710.8 271.1L711.2 278.6L705.1 278.0Z" fill="#999ea0" stroke="#3c3d3f" stroke-width="0.3"/><path d="M715.7 271.3L722.5 271.5L722.9 279.1L716.8 278.4Z" fill="#999ea0" stroke="#3c3d3f" stroke-width="0.3"/><path d="M727.4 271.7L734.2 271.9L734.5 279.5L728.4 278.8Z" fill="#999ea0" stroke="#3c3d3f" stroke-width="0.3"/><path d="M739.1 272.1L745.8 272.4L746.2 279.9L740.1 279.2Z" fill="#999ea0" stroke="#3c3d3f" stroke-width="0.3"/><path d="M750.8 272.5L757.5 272.8L757.9 280.3L751.8 279.7Z" fill="#999ea0" stroke="#3c3d3f" stroke-width="0.3"/><path d="M763.8 273.8L769.6 273.5L769.0 280.3L764.0 280.9Z" fill="#7d8083" stroke="#3c3d3f" stroke-width="0.3"/><path d="M773.5 273.3L779.4 273.1L778.7 279.8L773.8 280.5Z" fill="#7d8083" stroke="#3c3d3f" stroke-width="0.3"/><path d="M783.2 272.9L789.1 272.6L788.4 279.4L783.5 280.0Z" fill="#7d8083" stroke="#3c3d3f" stroke-width="0.3"/><path d="M793.0 272.4L798.8 272.1L798.2 278.9L793.2 279.5Z" fill="#7d8083" stroke="#3c3d3f" stroke-width="0.3"/><path d="M802.7 271.9L808.6 271.7L807.9 278.4L803.0 279.1Z" fill="#7d8083" stroke="#3c3d3f" stroke-width="0.3"/><path d="M812.5 271.5L818.3 271.2L817.7 278.0L812.7 278.6Z" fill="#7d8083" stroke="#3c3d3f" stroke-width="0.3"/><path d="M822.2 271.0L828.1 270.8L827.4 277.5L822.5 278.2Z" fill="#7d8083" stroke="#3c3d3f" stroke-width="0.3"/><path d="M831.9 270.6L837.8 270.3L837.1 277.1L832.2 277.7Z" fill="#7d8083" stroke="#3c3d3f" stroke-width="0.3"/><path d="M658.6 263.1L760.5 269.6L760.5 272.5L659.2 266.8Z" fill="#999ea0" stroke="#3c3d3f" stroke-width="0.3"/><path d="M760.5 269.6L846.2 265.1L845.6 268.6L760.5 272.5Z" fill="#6c6e71" stroke="#3c3d3f" stroke-width="0.3"/><path d="M652.1 253.4L759.2 258.6L760.5 267.3L657.9 261.6L653.4 257.9Z" fill="#999ea0" stroke="#3c3d3f" stroke-width="0.3"/><path d="M759.2 258.6L852.7 254.9L850.8 261.2L760.5 267.3Z" fill="#545557" stroke="#3c3d3f" stroke-width="0.3"/><path d="M652.1 253.4L759.2 258.6L759.4 260.0L652.3 255.1Z" fill="#b0b4b6"/><path d="M674.4 238.1L719.6 236.1L747.5 236.8L747.5 241.0Z" fill="#545557"/><path d="M741.7 219.0L747.5 219.0L747.5 237.4L741.7 236.1Z" fill="#999ea0" stroke="#3c3d3f" stroke-width="0.3"/><path d="M747.5 219.0L752.1 219.0L752.1 224.8L751.4 224.8L751.4 237.8L747.5 237.4Z" fill="#545557" stroke="#3c3d3f" stroke-width="0.3"/><path d="M765.1 237.1L829.4 238.2L829.4 240.0L765.1 241.0Z" fill="#888b8e"/><path d="M662.2 220.3L674.4 220.5L674.4 238.1L751.4 241.0L751.4 224.8L759.2 224.8L759.2 258.2L662.5 253.0Z" fill="#999ea0" stroke="#3c3d3f" stroke-width="0.3"/><path d="M759.2 224.8L765.1 224.8L765.1 241.0L829.4 239.7L829.4 221.6L841.4 221.6L841.4 254.7L759.2 258.2Z" fill="#545557" stroke="#3c3d3f" stroke-width="0.3"/><path d="M661.4 221.8L661.4 219.0L665.1 217.7L670.3 217.7L673.9 219.0L673.9 221.8Z" fill="#999ea0" stroke="#3c3d3f" stroke-width="0.3"/><path d="M667.7 193.0L671.6 206.0L672.6 211.2L670.3 217.7L665.1 217.7L662.7 211.2L663.8 206.0Z" fill="#999ea0" stroke="#3c3d3f" stroke-width="0.3"/><path d="M667.7 193.0L671.6 206.0L672.6 211.2L670.3 217.7L668.2 217.7L668.4 211.2Z" fill="#6c6e71"/><path d="M667.7 193.0L667.7 191.2" fill="none" stroke="#8a8d90" stroke-width="0.7"/><path d="M740.6 222.9L740.6 220.0L744.3 218.7L749.5 218.7L753.1 220.0L753.1 222.9Z" fill="#999ea0" stroke="#3c3d3f" stroke-width="0.3"/><path d="M746.9 194.0L750.8 207.0L751.8 212.2L749.5 218.7L744.3 218.7L741.9 212.2L743.0 207.0Z" fill="#999ea0" stroke="#3c3d3f" stroke-width="0.3"/><path d="M746.9 194.0L750.8 207.0L751.8 212.2L749.5 218.7L747.4 218.7L747.7 212.2Z" fill="#6c6e71"/><path d="M746.9 194.0L746.9 192.2" fill="none" stroke="#8a8d90" stroke-width="0.7"/><path d="M752.1 223.4L752.1 220.5L755.7 219.2L760.9 219.2L764.5 220.5L764.5 223.4Z" fill="#999ea0" stroke="#3c3d3f" stroke-width="0.3"/><path d="M758.3 194.5L762.2 207.5L763.2 212.7L760.9 219.2L755.7 219.2L753.4 212.7L754.4 207.5Z" fill="#999ea0" stroke="#3c3d3f" stroke-width="0.3"/><path d="M758.3 194.5L762.2 207.5L763.2 212.7L760.9 219.2L758.8 219.2L759.1 212.7Z" fill="#6c6e71"/><path d="M758.3 194.5L758.3 192.7" fill="none" stroke="#8a8d90" stroke-width="0.7"/><path d="M829.9 224.7L829.9 221.8L833.5 220.5L838.7 220.5L842.3 221.8L842.3 224.7Z" fill="#999ea0" stroke="#3c3d3f" stroke-width="0.3"/><path d="M836.1 195.8L840.0 208.8L841.0 214.0L838.7 220.5L833.5 220.5L831.2 214.0L832.2 208.8Z" fill="#999ea0" stroke="#3c3d3f" stroke-width="0.3"/><path d="M836.1 195.8L840.0 208.8L841.0 214.0L838.7 220.5L836.6 220.5L836.9 214.0Z" fill="#6c6e71"/><path d="M836.1 195.8L836.1 194.0" fill="none" stroke="#8a8d90" stroke-width="0.7"/><path d="M678.4 655.0L749.1 624.4L754.9 626.8L684.8 657.0Z" fill="#999ea0" stroke="#3c3d3f" stroke-width="0.4"/><path d="M684.8 657.0L754.0 627.7L691.0 697.9L685.2 701.8Z" fill="#545557"/><path d="M678.4 655.0L684.8 657.0L685.2 701.8L679.0 699.2Z" fill="#999ea0" stroke="#3c3d3f" stroke-width="0.4"/><path d="M754.9 626.8L867.0 666.7L864.3 669.9L752.3 629.7Z" fill="#a9adaf"/><path d="M752.3 629.7L864.3 669.9L862.6 671.8L750.6 631.5Z" fill="#8a8d90"/><path d="M750.6 631.5L862.6 671.8L859.9 675.0L748.0 634.5Z" fill="#a9adaf"/><path d="M748.0 634.5L859.9 675.0L858.2 677.0L746.4 636.3Z" fill="#8a8d90"/><path d="M746.4 636.3L858.2 677.0L855.5 680.1L743.7 639.2Z" fill="#a9adaf"/><path d="M743.7 639.2L855.5 680.1L853.9 682.1L742.1 641.0Z" fill="#8a8d90"/><path d="M742.1 641.0L853.9 682.1L851.1 685.3L739.5 644.0Z" fill="#a9adaf"/><path d="M739.5 644.0L851.1 685.3L849.5 687.2L737.9 645.8Z" fill="#8a8d90"/><path d="M737.9 645.8L849.5 687.2L846.8 690.4L735.2 648.7Z" fill="#a9adaf"/><path d="M735.2 648.7L846.8 690.4L845.1 692.3L733.6 650.5Z" fill="#8a8d90"/><path d="M733.6 650.5L845.1 692.3L842.4 695.5L731.0 653.4Z" fill="#a9adaf"/><path d="M731.0 653.4L842.4 695.5L840.7 697.5L729.3 655.2Z" fill="#8a8d90"/><path d="M729.3 655.2L840.7 697.5L838.0 700.6L726.7 658.2Z" fill="#a9adaf"/><path d="M726.7 658.2L838.0 700.6L836.3 702.6L725.1 660.0Z" fill="#8a8d90"/><path d="M725.1 660.0L836.3 702.6L833.6 705.8L722.4 662.9Z" fill="#a9adaf"/><path d="M722.4 662.9L833.6 705.8L832.0 707.7L720.8 664.7Z" fill="#8a8d90"/><path d="M720.8 664.7L832.0 707.7L829.2 710.9L718.2 667.7Z" fill="#a9adaf"/><path d="M718.2 667.7L829.2 710.9L827.6 712.8L716.6 669.5Z" fill="#8a8d90"/><path d="M716.6 669.5L827.6 712.8L824.9 716.0L713.9 672.4Z" fill="#a9adaf"/><path d="M713.9 672.4L824.9 716.0L823.2 718.0L712.3 674.2Z" fill="#8a8d90"/><path d="M712.3 674.2L823.2 718.0L820.5 721.1L709.7 677.1Z" fill="#a9adaf"/><path d="M709.7 677.1L820.5 721.1L818.8 723.1L708.0 678.9Z" fill="#8a8d90"/><path d="M708.0 678.9L818.8 723.1L816.1 726.3L705.4 681.9Z" fill="#a9adaf"/><path d="M705.4 681.9L816.1 726.3L814.4 728.2L703.8 683.7Z" fill="#8a8d90"/><path d="M703.8 683.7L814.4 728.2L811.7 731.4L701.1 686.6Z" fill="#a9adaf"/><path d="M701.1 686.6L811.7 731.4L810.1 733.3L699.5 688.4Z" fill="#8a8d90"/><path d="M699.5 688.4L810.1 733.3L807.3 736.5L696.9 691.4Z" fill="#a9adaf"/><path d="M696.9 691.4L807.3 736.5L805.7 738.5L695.3 693.2Z" fill="#8a8d90"/><path d="M695.3 693.2L805.7 738.5L803.0 741.7L692.6 696.1Z" fill="#a9adaf"/><path d="M692.6 696.1L803.0 741.7L801.3 743.6L691.0 697.9Z" fill="#8a8d90"/><path d="M810.5 704.7L875.7 669.6L895.2 703.7L809.5 755.3Z" fill="#545557"/><path d="M801.7 702.7L867.0 666.7L875.7 669.6L810.5 704.7Z" fill="#999ea0" stroke="#3c3d3f" stroke-width="0.4"/><path d="M801.7 702.7L810.5 704.7L809.5 755.3L801.3 752.4Z" fill="#999ea0" stroke="#3c3d3f" stroke-width="0.4"/><path d="M902.0 580.2L953.7 557.2L1074.1 588.3L1026.9 616.9Z" fill="#83868a"/><path d="M902.0 580.2L1026.9 616.9L1015.8 746.7L895.2 703.7Z" fill="#999ea0"/><path d="M1025.7 619.3L1067.2 635.4L1064.2 667.7L1040.6 684.6L1026.4 682.6L1020.7 743.4L1015.8 747.2L1026.9 616.9Z" fill="#545557"/><path d="M1067.2 635.4L1184.7 668.4L1179.7 702.0L1064.2 667.9Z" fill="url(#st)"/><path d="M1040.6 684.6L1064.2 667.9L1180.9 702.5L1178.0 731.3Z" fill="#888b8e"/><path d="M1189.6 705.7L1228.1 718.1L1197.1 736.7L1188.4 733.8Z" fill="#888b8e"/><path d="M1194.6 670.9L1238.1 633.7L1229.4 715.6L1190.9 705.7Z" fill="url(#st)"/><path d="M1194.6 670.9L1238.1 633.7L1229.4 715.6L1190.9 705.7Z" fill="url(#stg)"/><path d="M1241.8 629.3L1307.6 570.4L1292.7 679.7L1290.2 682.1L1260.4 721.8L1229.4 715.6L1238.1 633.7Z" fill="#545557"/><path d="M1241.8 629.3L1252.0 620.2L1244.0 718.5L1229.4 715.6L1238.1 633.7Z" fill="url(#st)"/><path d="M1283.0 592.3L1290.0 586.0L1277.0 699.5L1270.0 709.0Z" fill="url(#st)"/><path d="M1290.0 586.0L1297.0 579.8L1284.0 690.3L1277.0 699.5Z" fill="url(#st2)"/><path d="M1074.1 588.3L1239.3 629.3L1202.0 664.8L1026.9 616.9Z" fill="#888b8e" stroke="#3c3d3f" stroke-width="0.4"/><path d="M1026.9 616.9L1202.0 664.8L1202.0 667.3L1027.4 619.3Z" fill="#999ea0" stroke="#3c3d3f" stroke-width="0.3"/><path d="M1033.9 621.3L1207.8 667.3L1207.0 672.2L1034.4 626.3Z" fill="#999ea0" stroke="#3c3d3f" stroke-width="0.3"/><path d="M1184.7 668.4L1190.5 669.3L1184.0 733.5L1178.0 731.8Z" fill="#999ea0" stroke="#3c3d3f" stroke-width="0.4"/><path d="M1190.5 669.3L1193.9 669.9L1187.1 734.3L1184.0 733.5Z" fill="#7f8285" stroke="#3c3d3f" stroke-width="0.4"/><path d="M1233.1 718.9L1347.4 750.4L1338.7 800.6L1333.7 797.6Z" fill="#999ea0" stroke="#3c3d3f" stroke-width="0.3"/><path d="M1228.1 718.1L1233.1 719.4L1333.7 797.6L1320.0 793.9L1197.1 749.7L1197.1 737.2Z" fill="#888b8e"/><path d="M1200.7 751.0L1233.5 721.1" fill="none" stroke="#47494b" stroke-width="0.9"/><path d="M1208.0 753.6L1239.6 725.8" fill="none" stroke="#47494b" stroke-width="0.9"/><path d="M1214.2 755.9L1244.9 729.8" fill="none" stroke="#47494b" stroke-width="0.9"/><path d="M1220.0 757.9L1249.7 733.5" fill="none" stroke="#47494b" stroke-width="0.9"/><path d="M1225.5 759.9L1254.3 737.0" fill="none" stroke="#47494b" stroke-width="0.9"/><path d="M1230.7 761.8L1258.7 740.4" fill="none" stroke="#47494b" stroke-width="0.9"/><path d="M1235.8 763.6L1263.0 743.6" fill="none" stroke="#47494b" stroke-width="0.9"/><path d="M1240.7 765.4L1267.1 746.8" fill="none" stroke="#47494b" stroke-width="0.9"/><path d="M1245.5 767.1L1271.2 749.8" fill="none" stroke="#47494b" stroke-width="0.9"/><path d="M1250.2 768.8L1275.1 752.9" fill="none" stroke="#47494b" stroke-width="0.9"/><path d="M1254.8 770.5L1279.0 755.8" fill="none" stroke="#47494b" stroke-width="0.9"/><path d="M1259.4 772.1L1282.8 758.7" fill="none" stroke="#47494b" stroke-width="0.9"/><path d="M1263.8 773.7L1286.5 761.6" fill="none" stroke="#47494b" stroke-width="0.9"/><path d="M1268.2 775.3L1290.2 764.4" fill="none" stroke="#47494b" stroke-width="0.9"/><path d="M1272.6 776.8L1293.9 767.2" fill="none" stroke="#47494b" stroke-width="0.9"/><path d="M1276.9 778.4L1297.5 770.0" fill="none" stroke="#47494b" stroke-width="0.9"/><path d="M1281.1 779.9L1301.0 772.7" fill="none" stroke="#47494b" stroke-width="0.9"/><path d="M1285.3 781.4L1304.6 775.4" fill="none" stroke="#47494b" stroke-width="0.9"/><path d="M1289.5 782.9L1308.1 778.0" fill="none" stroke="#47494b" stroke-width="0.9"/><path d="M1293.6 784.4L1311.5 780.6" fill="none" stroke="#47494b" stroke-width="0.9"/><path d="M1297.6 785.9L1314.9 783.3" fill="none" stroke="#47494b" stroke-width="0.9"/><path d="M1301.7 787.3L1318.3 785.8" fill="none" stroke="#47494b" stroke-width="0.9"/><path d="M1305.7 788.7L1321.7 788.4" fill="none" stroke="#47494b" stroke-width="0.9"/><path d="M1309.6 790.2L1325.0 791.0" fill="none" stroke="#47494b" stroke-width="0.9"/><path d="M1313.6 791.6L1328.3 793.5" fill="none" stroke="#47494b" stroke-width="0.9"/><path d="M1317.5 793.0L1331.6 796.0" fill="none" stroke="#47494b" stroke-width="0.9"/><path d="M1318.8 793.1L1334.9 798.3L1317.6 833.6L1312.6 844.8Z" fill="#888b8e" stroke="#3c3d3f" stroke-width="0.3"/><path d="M1026.4 682.6L1196.6 737.2L1197.1 749.7L1318.8 793.1L1311.8 846.0L1020.7 743.4Z" fill="#999ea0" stroke="#3c3d3f" stroke-width="0.3"/><g fill="none"><circle cx="496.8" cy="587.4" r="12.3" stroke="#fff" stroke-width="1.5"/><circle cx="496.8" cy="587.4" r="12.3" stroke="#e01b1b" stroke-width="1.5" stroke-dasharray="4.83 4.83" stroke-dashoffset="2.4"/><path d="M496.0 563.9V578.9M497.6 595.9V610.9M473.8 593.9L488.8 589.6M504.8 585.1999999999999L519.8 580.9M478.8 580.4L489.8 584.6M503.8 590.1999999999999L514.8 594.4" stroke="#000" stroke-width="1.1"/></g><circle cx="479.6" cy="289.8" r="2.5" fill="#f5a02b" stroke="#2a2418" stroke-width=".9"/><path d="M136.5 617L142.5 616.2L143.6 621.3L138 622.6Z" fill="#8f97a8"/></svg>
</div>
<div style="left:0px;top:36px;width:1533px;height:33px;background:#383838;border-radius:0 6px 0 0;"></div>
<div style="left:0px;top:69px;width:408px;height:29.4px;background:#383838;border-radius:0 0 5px 0;"></div>
<div style="left:1424.5px;top:69px;width:108.5px;height:29.4px;background:#383838;border-radius:0 0 0 5px;"></div>
<svg style="left:408px;top:69px" width="5" height="5"><path d="M0 0H5A5 5 0 0 0 0 5Z" fill="#383838"/></svg>
<svg style="left:1419.5px;top:69px" width="5" height="5"><path d="M5 0H0A5 5 0 0 1 5 5Z" fill="#383838"/></svg>
<div style="left:5px;top:40px;width:38px;height:22.5px;background:#282828;border-radius:4.5px;box-shadow:0 1px 1px rgba(0,0,0,.3);"></div>
<svg style="left:9.5px;top:43px" width="18" height="17" viewBox="0 0 18 17"><circle cx="11.8" cy="4.6" r="4" fill="#e6e6e6"/><path d="M1 9.4H6.5M0.6 13.6H15.4M11 9.4H16.4M5.6 6.4L3.4 16.4M11 10L10.4 16.4" fill="none" stroke="#e6e6e6" stroke-linecap="round" stroke-linejoin="round" stroke-width="1.25"/></svg>
<svg style="left:31px;top:48px" width="9" height="8" viewBox="0 0 9 8"><path d="M1.3 2.3L4.5 5.6L7.7 2.3" fill="none" stroke="#e6e6e6" stroke-linecap="round" stroke-linejoin="round" stroke-width="1.35"/></svg>
<div style="left:51px;top:40px;width:135px;height:22.5px;background:#282828;border-radius:4.5px;box-shadow:0 1px 1px rgba(0,0,0,.3);"></div>
<svg style="left:56px;top:42.5px" width="18" height="18" viewBox="0 0 18 18"><rect x="4.4" y="4.4" width="9.2" height="9.2" fill="#e6e6e6"/><path d="M1 4.6V1H4.6M13.4 1H17V4.6M17 13.4V17H13.4M4.6 17H1V13.4" fill="none" stroke="#adadad" stroke-width="1.3"/></svg>
<div style="left:83px;top:41px;line-height:20px;height:20px;color:#e6e6e6;white-space:pre;opacity:.999;">Objektmodus</div>
<svg style="left:173px;top:48px" width="9" height="8" viewBox="0 0 9 8"><path d="M1.3 2.3L4.5 5.6L7.7 2.3" fill="none" stroke="#e6e6e6" stroke-linecap="round" stroke-linejoin="round" stroke-width="1.35"/></svg>
<div style="left:202.5px;top:41px;line-height:20px;height:20px;color:#e6e6e6;white-space:pre;opacity:.999;">Ansicht</div>
<div style="left:269.5px;top:41px;line-height:20px;height:20px;color:#e6e6e6;white-space:pre;opacity:.999;">Auswählen</div>
<div style="left:359.5px;top:41px;line-height:20px;height:20px;color:#e6e6e6;white-space:pre;opacity:.999;">Hinzufügen</div>
<div style="left:451.5px;top:41px;line-height:20px;height:20px;color:#e6e6e6;white-space:pre;opacity:.999;">Objekt</div>
<div style="left:607px;top:40px;width:98px;height:22.5px;background:#282828;border-radius:4.5px;box-shadow:0 1px 1px rgba(0,0,0,.3);"></div>
<svg style="left:612px;top:42.5px" width="18" height="18" viewBox="0 0 18 18"><path d="M3.6 2V14.2H16M3.6 14.2L11 6.6L11.4 9.6" fill="none" stroke="#e6e6e6" stroke-linecap="round" stroke-linejoin="round" stroke-width="1.2"/><path d="M1.4 4.2L3.6 1.2L5.8 4.2M13.8 12L16.8 14.2L13.8 16.4" fill="none" stroke="#e6e6e6" stroke-linecap="round" stroke-linejoin="round" stroke-width="1.2"/><circle cx="3.6" cy="14.4" r="1.7" fill="#282828" stroke="#e6e6e6" stroke-width="1.1"/></svg>
<div style="left:639.5px;top:41px;line-height:20px;height:20px;color:#e6e6e6;white-space:pre;opacity:.999;">Global</div>
<svg style="left:693px;top:48px" width="9" height="8" viewBox="0 0 9 8"><path d="M1.3 2.3L4.5 5.6L7.7 2.3" fill="none" stroke="#e6e6e6" stroke-linecap="round" stroke-linejoin="round" stroke-width="1.35"/></svg>
<div style="left:713.5px;top:40px;width:38px;height:22.5px;background:#282828;border-radius:4.5px;box-shadow:0 1px 1px rgba(0,0,0,.3);"></div>
<svg style="left:717.5px;top:42.5px" width="19" height="18" viewBox="0 0 19 18"><circle cx="6.6" cy="11.2" r="5" fill="none" stroke="#e6e6e6" stroke-width="1.3"/><circle cx="12" cy="6.8" r="5" fill="none" stroke="#e6e6e6" stroke-width="1.3"/><circle cx="9.3" cy="9" r="1.7" fill="#e6e6e6"/></svg>
<svg style="left:740px;top:48px" width="9" height="8" viewBox="0 0 9 8"><path d="M1.3 2.3L4.5 5.6L7.7 2.3" fill="none" stroke="#e6e6e6" stroke-linecap="round" stroke-linejoin="round" stroke-width="1.35"/></svg>
<div style="left:759.5px;top:40px;width:23.5px;height:22.5px;background:#545454;border-radius:4.5px 0 0 4.5px;box-shadow:0 1px 1px rgba(0,0,0,.3);"></div>
<svg style="left:762.5px;top:43px" width="17" height="17" viewBox="0 0 17 17"><path d="M1.6 7.8L6.6 2.8A5.4 5.4 0 1 1 14.2 10.4L9.2 15.4L6.8 13L11.8 8A2 2 0 1 0 9 5.2L4 10.2Z" fill="none" stroke="#c4c4c4" stroke-linecap="round" stroke-linejoin="round" stroke-width="1.25"/></svg>
<div style="left:782.5px;top:40px;width:40px;height:22.5px;background:#282828;border-radius:0 4.5px 4.5px 0;box-shadow:0 1px 1px rgba(0,0,0,.3);"></div>
<svg style="left:786px;top:43px" width="17" height="17" viewBox="0 0 17 17"><path d="M1 11.6H15.6M1.2 8.6V14.6M5.9 9.6V13.6M10.7 9.6V13.6M15.4 8.6V14.6" fill="none" stroke="#e6e6e6" stroke-linecap="butt" stroke-linejoin="miter" stroke-width="1.25"/><rect x="11.4" y="1.4" width="4.4" height="4.4" fill="#e6e6e6"/></svg>
<svg style="left:810px;top:48px" width="9" height="8" viewBox="0 0 9 8"><path d="M1.3 2.3L4.5 5.6L7.7 2.3" fill="none" stroke="#e6e6e6" stroke-linecap="round" stroke-linejoin="round" stroke-width="1.35"/></svg>
<div style="left:830px;top:40px;width:23.5px;height:22.5px;background:#545454;border-radius:4.5px 0 0 4.5px;box-shadow:0 1px 1px rgba(0,0,0,.3);"></div>
<svg style="left:833px;top:43px" width="17" height="17" viewBox="0 0 17 17"><circle cx="8.5" cy="8.5" r="6.6" fill="none" stroke="#9a9a9a" stroke-width="1.2"/><circle cx="8.5" cy="8.5" r="2.3" fill="#9a9a9a"/></svg>
<div style="left:853px;top:40px;width:40.5px;height:22.5px;background:#282828;border-radius:0 4.5px 4.5px 0;box-shadow:0 1px 1px rgba(0,0,0,.3);"></div>
<svg style="left:857px;top:43px" width="17" height="17" viewBox="0 0 17 17"><path d="M0.8 14.6C5.6 14.6 5.6 2 8.5 2C11.4 2 11.4 14.6 16.2 14.6" fill="none" stroke="#b0b0b0" stroke-linecap="round" stroke-linejoin="round" stroke-width="1.25"/></svg>
<svg style="left:880px;top:48px" width="9" height="8" viewBox="0 0 9 8"><path d="M1.3 2.3L4.5 5.6L7.7 2.3" fill="none" stroke="#5a5a5a" stroke-linecap="round" stroke-linejoin="round" stroke-width="1.35"/></svg>
<div style="left:1214px;top:40px;width:38.5px;height:22.5px;background:#282828;border-radius:4.5px;box-shadow:0 1px 1px rgba(0,0,0,.3);"></div>
<svg style="left:1217px;top:42px" width="19" height="19" viewBox="0 0 19 19"><path d="M.8 8.6L11.2 11.6L7.4 13.2L5.8 17.6Z" fill="#e6e6e6"/><path d="M4.4 5.2C7.4 -.4 15.6 -.4 18.6 5.2C15.6 10.8 7.4 10.8 4.4 5.2Z" fill="#e6e6e6"/><circle cx="11.5" cy="5" r="3" fill="#282828"/><circle cx="11.5" cy="5" r="1.4" fill="#e6e6e6"/></svg>
<svg style="left:1240px;top:48px" width="9" height="8" viewBox="0 0 9 8"><path d="M1.3 2.3L4.5 5.6L7.7 2.3" fill="none" stroke="#e6e6e6" stroke-linecap="round" stroke-linejoin="round" stroke-width="1.35"/></svg>
<div style="left:1260.5px;top:40px;width:23.5px;height:22.5px;background:#4772b3;border-radius:4.5px 0 0 4.5px;box-shadow:0 1px 1px rgba(0,0,0,.3);"></div>
<svg style="left:1263px;top:42.5px" width="18" height="18" viewBox="0 0 18 18"><path d="M2 3.6C9 3.4 14.4 8.4 14.8 16" fill="none" stroke="#e6e6e6" stroke-linecap="round" stroke-linejoin="round" stroke-width="1.3"/><path d="M5.8 13L15.8 2M11 2H15.9V6.8" fill="none" stroke="#e6e6e6" stroke-linecap="round" stroke-linejoin="round" stroke-width="1.3"/><circle cx="4.4" cy="14.4" r="2.1" fill="none" stroke="#e6e6e6" stroke-width="1.2"/></svg>
<div style="left:1283.5px;top:40px;width:25px;height:22.5px;background:#282828;border-radius:0 4.5px 4.5px 0;box-shadow:0 1px 1px rgba(0,0,0,.3);"></div>
<svg style="left:1291.5px;top:48px" width="9" height="8" viewBox="0 0 9 8"><path d="M1.3 2.3L4.5 5.6L7.7 2.3" fill="none" stroke="#e6e6e6" stroke-linecap="round" stroke-linejoin="round" stroke-width="1.35"/></svg>
<div style="left:1316px;top:40px;width:23.5px;height:22.5px;background:#4772b3;border-radius:4.5px 0 0 4.5px;box-shadow:0 1px 1px rgba(0,0,0,.3);"></div>
<svg style="left:1319px;top:42.5px" width="18" height="18" viewBox="0 0 18 18"><circle cx="11.2" cy="7" r="6.2" fill="#e6e6e6"/><circle cx="7" cy="11.2" r="5.6" fill="#4772b3" stroke="#e6e6e6" stroke-width="1.3"/><path d="M5.4 6.1A6.2 6.2 0 0 0 12.2 13.1A5.6 5.6 0 0 0 5.4 6.1Z" fill="#e6e6e6" opacity="0"/></svg>
<div style="left:1339px;top:40px;width:25.5px;height:22.5px;background:#282828;border-radius:0 4.5px 4.5px 0;box-shadow:0 1px 1px rgba(0,0,0,.3);"></div>
<svg style="left:1347.5px;top:48px" width="9" height="8" viewBox="0 0 9 8"><path d="M1.3 2.3L4.5 5.6L7.7 2.3" fill="none" stroke="#e6e6e6" stroke-linecap="round" stroke-linejoin="round" stroke-width="1.35"/></svg>
<div style="left:1372.5px;top:40px;width:22.5px;height:22.5px;background:#545454;border-radius:4.5px;box-shadow:0 1px 1px rgba(0,0,0,.3);"></div>
<svg style="left:1375px;top:42.5px" width="18" height="18" viewBox="0 0 18 18"><path d="M5.6 4.6V1.6H16.4V12.4H13.4" fill="none" stroke="#e6e6e6" stroke-linecap="butt" stroke-linejoin="miter" stroke-width="1.2"/><rect x="1.6" y="5.2" width="11.2" height="11.2" fill="none" stroke="#e6e6e6" stroke-width="1.3"/><path d="M5.4 8V9.6M5.4 11V12.4H6.8M8.4 12.4H10" fill="none" stroke="#e6e6e6" stroke-linecap="butt" stroke-linejoin="miter" stroke-width="1.1"/></svg>
<div style="left:1403px;top:40px;width:24px;height:22.5px;background:#545454;border-radius:4.5px 0 0 4.5px;box-shadow:0 1px 1px rgba(0,0,0,.3);"></div>
<svg style="left:1406px;top:42.5px" width="18" height="18" viewBox="0 0 18 18"><circle cx="9" cy="9" r="7.2" fill="none" stroke="#c8c8c8" stroke-width="1.15"/><ellipse cx="9" cy="9" rx="3.2" ry="7.2" fill="none" stroke="#c8c8c8" stroke-width="1.1"/><path d="M1.8 9H16.2" stroke="#c8c8c8" stroke-width="1.1"/></svg>
<div style="left:1426.5px;top:40px;width:24px;height:22.5px;background:#4772b3;border-radius:0;box-shadow:0 1px 1px rgba(0,0,0,.3);"></div>
<svg style="left:1429.5px;top:42.5px" width="18" height="18" viewBox="0 0 18 18"><circle cx="9" cy="9" r="7.7" fill="#ffffff"/></svg>
<div style="left:1450.5px;top:40px;width:24px;height:22.5px;background:#545454;border-radius:0;box-shadow:0 1px 1px rgba(0,0,0,.3);"></div>
<svg style="left:1453.5px;top:42.5px" width="18" height="18" viewBox="0 0 18 18"><circle cx="9" cy="9" r="7.2" fill="none" stroke="#c8c8c8" stroke-width="1.15"/><path d="M9 9.6V1.8A7.2 7.2 0 0 0 2.6 12.4Q6 12.2 9 9.6Z" fill="#c8c8c8"/><path d="M12 15.2l1.2-1.4M13.6 14l1.2-1.4M10.4 15.8l1-1.2M15 12.4l.8-1" stroke="#c8c8c8" stroke-width=".8"/></svg>
<div style="left:1474.5px;top:40px;width:24px;height:22.5px;background:#545454;border-radius:0;box-shadow:0 1px 1px rgba(0,0,0,.3);"></div>
<svg style="left:1477.5px;top:42.5px" width="18" height="18" viewBox="0 0 18 18"><circle cx="9" cy="9" r="7.2" fill="none" stroke="#c8c8c8" stroke-width="1.15"/><path d="M4.6 7.6A4.8 4.8 0 0 1 8 4.4" fill="none" stroke="#c8c8c8" stroke-linecap="round" stroke-linejoin="round" stroke-width="1.9"/><path d="M11 15.4l1.2-1.4M12.8 14.4l1.2-1.4M14.2 12.8l1-1.2" stroke="#c8c8c8" stroke-width=".8"/></svg>
<div style="left:1498.5px;top:40px;width:24.5px;height:22.5px;background:#282828;border-radius:0 4.5px 4.5px 0;box-shadow:0 1px 1px rgba(0,0,0,.3);"></div>
<svg style="left:1506px;top:48px" width="9" height="8" viewBox="0 0 9 8"><path d="M1.3 2.3L4.5 5.6L7.7 2.3" fill="none" stroke="#e6e6e6" stroke-linecap="round" stroke-linejoin="round" stroke-width="1.35"/></svg>
<div style="left:4.5px;top:73px;line-height:20px;height:20px;color:#e6e6e6;white-space:pre;opacity:.999;">Ausrichtung:</div>
<div style="left:92.5px;top:72px;width:122.5px;height:22.5px;background:#282828;border-radius:4.5px;box-shadow:0 1px 1px rgba(0,0,0,.3);"></div>
<svg style="left:97px;top:74.5px" width="18" height="18" viewBox="0 0 18 18"><path d="M4.6 1.6V9M9 13.4H16.4" fill="none" stroke="#e6e6e6" stroke-linecap="round" stroke-linejoin="round" stroke-width="1.1"/><path d="M2.4 4L4.6 1.2L6.8 4M14 11.2L16.8 13.4L14 15.6M3.4 14.6L1.2 16.8M1.2 14.8V16.8H3.2" fill="none" stroke="#e6e6e6" stroke-linecap="round" stroke-linejoin="round" stroke-width="1.1"/><circle cx="5" cy="13" r="2.1" fill="#e6e6e6"/></svg>
<div style="left:124.5px;top:73px;line-height:20px;height:20px;color:#e6e6e6;white-space:pre;opacity:.999;">Vorgabe</div>
<svg style="left:203.5px;top:80px" width="9" height="8" viewBox="0 0 9 8"><path d="M1.3 2.3L4.5 5.6L7.7 2.3" fill="none" stroke="#e6e6e6" stroke-linecap="round" stroke-linejoin="round" stroke-width="1.35"/></svg>
<div style="left:227.5px;top:73px;line-height:20px;height:20px;color:#e6e6e6;white-space:pre;opacity:.999;">Ziehen:</div>
<div style="left:287.5px;top:72px;width:110px;height:22.5px;background:#282828;border-radius:4.5px;box-shadow:0 1px 1px rgba(0,0,0,.3);"></div>
<div style="left:296.5px;top:73px;line-height:20px;height:20px;color:#e6e6e6;white-space:pre;opacity:.999;">Auswahlbox</div>
<svg style="left:385.5px;top:80px" width="9" height="8" viewBox="0 0 9 8"><path d="M1.3 2.3L4.5 5.6L7.7 2.3" fill="none" stroke="#e6e6e6" stroke-linecap="round" stroke-linejoin="round" stroke-width="1.35"/></svg>
<div style="left:1436px;top:72px;width:88px;height:22.5px;background:#282828;border-radius:4.5px;box-shadow:0 1px 1px rgba(0,0,0,.3);"></div>
<div style="left:1445px;top:73px;line-height:20px;height:20px;color:#e6e6e6;white-space:pre;opacity:.999;">Optionen</div>
<svg style="left:1512px;top:80px" width="9" height="8" viewBox="0 0 9 8"><path d="M1.3 2.3L4.5 5.6L7.7 2.3" fill="none" stroke="#e6e6e6" stroke-linecap="round" stroke-linejoin="round" stroke-width="1.35"/></svg>
<div style="left:4px;top:110px;width:48px;height:41.5px;background:#282828;border-radius:5px 5px 0 0;"></div>
<svg style="left:13px;top:115.5px" width="30" height="30" viewBox="0 0 30 30"><rect x="2.2" y="2.2" width="25.6" height="25.6" rx="1.5" fill="none" stroke="#d9a955" stroke-width="1.5" stroke-dasharray="5.4 2.4"/><path d="M11 8.4L21.6 16.2L15.6 17.2L12 22.6Z" fill="#e6e6e6"/></svg>
<svg style="left:45.5px;top:145px" width="5" height="5"><path d="M5 0V5H0Z" fill="#8a8a8a"/></svg>
<div style="left:4px;top:152.5px;width:48px;height:41.5px;background:#282828;border-radius:0 0 5px 5px;"></div>
<svg style="left:13px;top:158.0px" width="30" height="30" viewBox="0 0 30 30"><circle cx="15" cy="15" r="13.6" fill="none" stroke="#c9404c" stroke-width="1.6"/><circle cx="15" cy="15" r="13.6" fill="none" stroke="#ffffff" stroke-width="1.6" stroke-dasharray="7.6 3.08" stroke-dashoffset="3.8"/><path d="M15 6.4V12.6M15 17.4V23.6M6.4 15H12.6M17.4 15H23.6" stroke="#9a9a9a" stroke-width="1.9"/></svg>
<div style="left:4px;top:202px;width:48px;height:41.5px;background:#4772b3;border-radius:5px 5px 0 0;"></div>
<svg style="left:13px;top:207.5px" width="30" height="30" viewBox="0 0 30 30"><path d="M15 .2L19 6.2H11ZM15 29.8L11 23.8H19ZM.2 15L6.2 11V19ZM29.8 15L23.8 19V11Z" fill="#e6e6e6"/><path d="M15 7.8V11.2M15 18.8V22.2M7.8 15H11.2M18.8 15H22.2" stroke="#e6e6e6" stroke-width="2.2"/></svg>
<div style="left:4px;top:244.5px;width:48px;height:41.5px;background:#282828;border-radius:0 0 0 0;"></div>
<svg style="left:13px;top:250.0px" width="30" height="30" viewBox="0 0 30 30"><path d="M6.2 9A11.4 11.4 0 0 1 23.8 9M5.6 20.4A11.4 11.4 0 0 0 24.4 20.4" fill="none" stroke="#e6e6e6" stroke-linecap="round" stroke-linejoin="round" stroke-width="1.5"/><path d="M1.6 13.4H9L5.2 18.8ZM21 13.4H28.4L24.8 18.8Z" fill="#e6e6e6"/><path d="M15 10.8L19.2 15L15 19.2L10.8 15Z" fill="#b4b4b4"/></svg>
<div style="left:4px;top:287px;width:48px;height:41.5px;background:#282828;border-radius:0 0 0 0;"></div>
<svg style="left:13px;top:292.5px" width="30" height="30" viewBox="0 0 30 30"><rect x="3" y="15.6" width="11.4" height="11.4" fill="#e6e6e6"/><path d="M7.4 11V3H27V22.6H19" fill="none" stroke="#e6e6e6" stroke-linecap="butt" stroke-linejoin="miter" stroke-width="1.5"/><path d="M16.8 13.2L23 7M18.6 6.4H23.6V11.4" fill="none" stroke="#e6e6e6" stroke-linecap="round" stroke-linejoin="round" stroke-width="1.5"/></svg>
<svg style="left:45.5px;top:322px" width="5" height="5"><path d="M5 0V5H0Z" fill="#8a8a8a"/></svg>
<div style="left:4px;top:329.5px;width:48px;height:41.5px;background:#282828;border-radius:0 0 5px 5px;"></div>
<svg style="left:13px;top:335.0px" width="30" height="30" viewBox="0 0 30 30"><circle cx="15" cy="15" r="10.6" fill="none" stroke="#e6e6e6" stroke-width="1.5"/><rect x="10" y="10" width="10" height="10" fill="#e6e6e6"/><path d="M15 .6L18.4 5.4H11.6ZM15 29.4L11.6 24.6H18.4ZM.6 15L5.4 11.6V18.4ZM29.4 15L24.6 18.4V11.6Z" fill="#e6e6e6" stroke="#282828" stroke-width="1.2"/></svg>
<div style="left:4px;top:380px;width:48px;height:41.5px;background:#282828;border-radius:5px 5px 0 0;"></div>
<svg style="left:13px;top:385.5px" width="30" height="30" viewBox="0 0 30 30"><path d="M4.6 23.4C8.6 30 14.6 26 17.4 21.6C20.4 17 25 17.6 27.4 22.6" fill="none" stroke="#8fdcb2" stroke-width="1.7" stroke-linecap="round"/><path d="M20.6 2.2L25 6.6L10.4 21.2L4.4 22.8L6 16.8Z" fill="#e6e6e6"/><path d="M18.2 4.6L22.6 9M6.4 16.4L10.8 20.8" stroke="#282828" stroke-width="1.3"/></svg>
<svg style="left:45.5px;top:415px" width="5" height="5"><path d="M5 0V5H0Z" fill="#8a8a8a"/></svg>
<div style="left:4px;top:422.5px;width:48px;height:41.5px;background:#282828;border-radius:0 0 5px 5px;"></div>
<svg style="left:13px;top:428.0px" width="30" height="30" viewBox="0 0 30 30"><path d="M10.4 13A13 13 0 0 1 23.6 25.6H10.4Z" fill="#8fdcb2"/><path d="M9.6 10.6A15.6 15.6 0 0 1 25.8 25" fill="none" stroke="#8fdcb2" stroke-width="1.4"/><path d="M4 1.6H10.4V23.6H28.8V29.4H4Z" fill="#e6e6e6"/><path d="M7.6 4h2.8M8.4 6.6h2M7.6 9.2h2.8M8.4 11.8h2M7.6 14.4h2.8M8.4 17h2M7.6 19.6h2.8M12 26V29M14.4 27V29M16.8 26V29M19.2 27V29M21.6 26V29M24 27V29M26.4 26V29" stroke="#282828" stroke-width=".9"/></svg>
<div style="left:4px;top:472px;width:48px;height:41.5px;background:#282828;border-radius:5px 5px 5px 5px;"></div>
<svg style="left:13px;top:477.5px" width="30" height="30" viewBox="0 0 30 30"><path d="M8.6 13.2H22.6V27.6H8.6ZM8.6 13.2L13.6 8.4H28V22L22.6 27.6M22.6 13.2L28 8.4" fill="none" stroke="#8fdcb2" stroke-width="1.4" stroke-linejoin="round"/><path d="M5.4 1V10M.9 5.5H9.9" stroke="#8fdcb2" stroke-width="2.3"/></svg>
<svg style="left:45.5px;top:507px" width="5" height="5"><path d="M5 0V5H0Z" fill="#8a8a8a"/></svg>
<div style="left:74.5px;top:109px;line-height:20px;height:20px;color:#ffffff;white-space:pre;opacity:.999;text-shadow:0 0 2px #000,0 1px 1px rgba(0,0,0,.8);">Benutzeransicht</div>
<div style="left:74.5px;top:131px;line-height:20px;height:20px;color:#ffffff;white-space:pre;opacity:.999;text-shadow:0 0 2px #000,0 1px 1px rgba(0,0,0,.8);letter-spacing:0.14px;">(1) Collection | obj_9</div>
<div style="left:1523px;top:118px;width:10px;height:16.5px;background:#333333;border-radius:4px 0 0 4px;"></div>
<svg style="left:1525px;top:121.5px" width="6" height="10" viewBox="0 0 6 10"><path d="M5 1L1 5L5 9" fill="none" stroke="#b0b0b0" stroke-linecap="round" stroke-linejoin="round" stroke-width="1.4"/></svg>
<svg style="left:1420px;top:100px" width="113" height="120" viewBox="1420 100 113 120">
<line x1="1470.8" y1="160.7" x2="1440.6" y2="153.3" stroke="#6a9c1f" stroke-width="2.4"/>
<circle cx="1471.6" cy="122.3" r="9.6" fill="#3e5473" stroke="#3a84e0" stroke-width="1.4"/>
<circle cx="1496.8" cy="153" r="8.7" fill="#4f3c3f" stroke="#c4354f" stroke-width="1.3"/>
<circle cx="1501.4" cy="168.4" r="9.7" fill="#55682e" stroke="#86d016" stroke-width="1.4"/>
<circle cx="1440.6" cy="153.3" r="9.5" fill="#6a9c1f"/>
<line x1="1470.8" y1="160.7" x2="1445" y2="168.8" stroke="#f23a5a" stroke-width="2.4"/>
<line x1="1470.8" y1="160.7" x2="1470.4" y2="199.5" stroke="#3478d0" stroke-width="2.4"/>
<circle cx="1445" cy="168.8" r="10.5" fill="#f23a5a"/>
<circle cx="1470.4" cy="199.5" r="9.5" fill="#2f79cf"/>
<g font-family="Liberation Sans,sans-serif" font-weight="bold" font-size="12.5" text-anchor="middle">
<text x="1440.8" y="157.6" fill="#1b2a06">Y</text>
<text x="1445" y="173.3" fill="#4a0a16">X</text>
<text x="1470.4" y="204" fill="#0a213f">Z</text></g>
</svg>
<div style="left:1488px;top:212.5px;width:34px;height:34px;background:#2e2e2e;border-radius:50%;"></div>
<svg style="left:1494px;top:218.5px" width="22" height="22" viewBox="0 0 22 22"><circle cx="13" cy="8.6" r="6.9" fill="#e6e6e6"/><path d="M8.4 13.6L2.2 19.4" stroke="#e6e6e6" stroke-width="2.6" stroke-linecap="round"/><path d="M13 5V12.2M9.4 8.6H16.6" stroke="#2e2e2e" stroke-width="1.4"/></svg>
<div style="left:1488px;top:249.89999999999998px;width:34px;height:34px;background:#2e2e2e;border-radius:50%;"></div>
<svg style="left:1494px;top:255.89999999999998px" width="22" height="22" viewBox="0 0 22 22"><path d="M6.2 21C4.4 18 2 14.4 1.4 12.4C1.2 11 2.8 10.4 3.8 11.6L6 14.4V4.2C6 2.6 8.2 2.6 8.4 4.2L9 10V2.4C9.2.8 11.4.8 11.6 2.4L12 10L12.8 3.4C13.2 1.8 15.2 2 15.2 3.8L15.4 10.6L16.8 6.6C17.4 5.2 19.4 5.8 19 7.4C18.2 11.4 18 16 16.4 21Z" fill="#e6e6e6"/></svg>
<div style="left:1488px;top:287.3px;width:34px;height:34px;background:#2e2e2e;border-radius:50%;"></div>
<svg style="left:1494px;top:293.3px" width="22" height="22" viewBox="0 0 22 22"><circle cx="6" cy="5.6" r="3.9" fill="#e6e6e6"/><circle cx="14.6" cy="5" r="4.6" fill="#e6e6e6"/><circle cx="14.6" cy="5" r="1.7" fill="#2e2e2e"/><circle cx="6" cy="5.6" r="1.3" fill="#2e2e2e"/><rect x="3.4" y="10.4" width="12.4" height="9.4" rx="1.4" fill="#e6e6e6"/><path d="M16.6 15L21.4 11.6V19.6Z" fill="#e6e6e6"/><path d="M1 15.8H3.4" stroke="#e6e6e6" stroke-width="1.8"/></svg>
<div style="left:1488px;top:324.7px;width:34px;height:34px;background:#2e2e2e;border-radius:50%;"></div>
<svg style="left:1494px;top:330.7px" width="22" height="22" viewBox="0 0 22 22"><path d="M6.2 3H15.8L20.6 19H1.4Z" fill="none" stroke="#e6e6e6" stroke-width="1.9" stroke-linejoin="round"/><path d="M8.7 3L6.3 19M11 3V19M13.3 3L15.7 19M4.6 8.2H17.4M3 13.4H19" stroke="#e6e6e6" stroke-width="1.5"/></svg>
<div style="left:0px;top:947.5px;width:1533px;height:31.7px;background:#303030;border-radius:0 6px 0 0;"></div>
<div style="left:0px;top:979.2px;width:1533px;height:42px;background:#1d1d1d;border-radius:0 0 6px 0;"></div>
<div style="left:3.5px;top:952.5px;width:39px;height:23.5px;background:#282828;border-radius:4.5px;border:1px solid #3d3d3d;box-sizing:border-box;"></div>
<svg style="left:8.5px;top:955.5px" width="18" height="18" viewBox="0 0 18 18"><circle cx="9" cy="9" r="8" fill="#e6e6e6"/><path d="M11.6 4.4L7.6 9.2L11.6 14" fill="none" stroke="#282828" stroke-width="2.1"/></svg>
<svg style="left:30px;top:961px" width="9" height="8" viewBox="0 0 9 8"><path d="M1.3 2.3L4.5 5.6L7.7 2.3" fill="none" stroke="#e6e6e6" stroke-linecap="round" stroke-linejoin="round" stroke-width="1.35"/></svg>
<div style="left:49.5px;top:952.5px;width:110.5px;height:23.5px;background:#282828;border-radius:4.5px 0 0 4.5px;border:1px solid #3d3d3d;box-sizing:border-box;"></div>
<div style="left:59px;top:954px;line-height:20px;height:20px;color:#e6e6e6;white-space:pre;opacity:.999;">Wiedergabe</div>
<svg style="left:147.5px;top:961px" width="9" height="8" viewBox="0 0 9 8"><path d="M1.3 2.3L4.5 5.6L7.7 2.3" fill="none" stroke="#e6e6e6" stroke-linecap="round" stroke-linejoin="round" stroke-width="1.35"/></svg>
<div style="left:159px;top:952.5px;width:76.5px;height:23.5px;background:#282828;border-radius:0 4.5px 4.5px 0;border:1px solid #3d3d3d;box-sizing:border-box;"></div>
<div style="left:169.5px;top:954px;line-height:20px;height:20px;color:#e6e6e6;white-space:pre;opacity:.999;">Keying</div>
<svg style="left:223.5px;top:961px" width="9" height="8" viewBox="0 0 9 8"><path d="M1.3 2.3L4.5 5.6L7.7 2.3" fill="none" stroke="#e6e6e6" stroke-linecap="round" stroke-linejoin="round" stroke-width="1.35"/></svg>
<div style="left:247.5px;top:954px;line-height:20px;height:20px;color:#e6e6e6;white-space:pre;opacity:.999;">Ansicht</div>
<div style="left:314.5px;top:954px;line-height:20px;height:20px;color:#e6e6e6;white-space:pre;opacity:.999;">Markierung</div>
<div style="left:648px;top:952.5px;width:24px;height:23.5px;background:#545454;border-radius:4.5px 0 0 4.5px;border:1px solid #3d3d3d;box-sizing:border-box;"></div>
<div style="left:654.5px;top:959px;width:10.5px;height:10.5px;border-radius:50%;background:#e6e6e6"></div>
<div style="left:671.5px;top:952.5px;width:25px;height:23.5px;background:#2b2b2b;border-radius:0 4.5px 4.5px 0;border:1px solid #3d3d3d;box-sizing:border-box;"></div>
<svg style="left:679px;top:961px" width="9" height="8" viewBox="0 0 9 8"><path d="M1.3 2.3L4.5 5.6L7.7 2.3" fill="none" stroke="#555555" stroke-linecap="round" stroke-linejoin="round" stroke-width="1.35"/></svg>
<div style="left:704.0px;top:952.5px;width:23.8px;height:23.5px;background:#545454;border-radius:4px 0 0 4px;"></div>
<svg style="left:705.6px;top:953.9px" width="21" height="21" viewBox="0 0 17 17"><path d="M3.6 3V14" stroke="#e6e6e6" stroke-width="1.9"/><path d="M13.6 3.2V13.8L5.6 8.5Z" fill="#e6e6e6"/></svg>
<div style="left:728.8px;top:952.5px;width:23.8px;height:23.5px;background:#545454;border-radius:0;"></div>
<svg style="left:730.4px;top:953.9px" width="21" height="21" viewBox="0 0 17 17"><path d="M4.6 4L9.1 8.5L4.6 13L.1 8.5Z" fill="#e6e6e6"/><path d="M16.8 4.6V12.4L10.4 8.5Z" fill="#e6e6e6"/></svg>
<div style="left:753.6px;top:952.5px;width:23.8px;height:23.5px;background:#545454;border-radius:0;"></div>
<svg style="left:755.2px;top:953.9px" width="21" height="21" viewBox="0 0 17 17"><path d="M13.4 2.4V14.6L3.4 8.5Z" fill="#e6e6e6"/></svg>
<div style="left:778.4px;top:952.5px;width:23.8px;height:23.5px;background:#545454;border-radius:0;"></div>
<svg style="left:780.0px;top:953.9px" width="21" height="21" viewBox="0 0 17 17"><path d="M4 2.2V14.8L14.4 8.5Z" fill="#e6e6e6"/></svg>
<div style="left:803.2px;top:952.5px;width:23.8px;height:23.5px;background:#545454;border-radius:0;"></div>
<svg style="left:804.8000000000001px;top:953.9px" width="21" height="21" viewBox="0 0 17 17"><path d="M12.4 4L16.9 8.5L12.4 13L7.9 8.5Z" fill="#e6e6e6"/><path d="M.2 4.6V12.4L6.6 8.5Z" fill="#e6e6e6"/></svg>
<div style="left:828.0px;top:952.5px;width:24.8px;height:23.5px;background:#545454;border-radius:0 4px 4px 0;"></div>
<svg style="left:829.6px;top:953.9px" width="21" height="21" viewBox="0 0 17 17"><path d="M13.4 3V14" stroke="#e6e6e6" stroke-width="1.9"/><path d="M3.4 3.2V13.8L11.4 8.5Z" fill="#e6e6e6"/></svg>
<div style="left:1175.7px;top:952.5px;width:92px;height:23.5px;background:#545454;border-radius:4.5px;border:1px solid #545454;box-sizing:border-box;"></div>
<div style="left:1071.3px;width:300px;text-align:center;top:954px;line-height:20px;height:20px;color:#e6e6e6;white-space:pre;opacity:.999;">1</div>
<div style="left:1274.5px;top:952.5px;width:23.7px;height:23.5px;background:#545454;border-radius:4px 0 0 4px;"></div>
<svg style="left:1277.5px;top:955px" width="18" height="18" viewBox="0 0 18 18"><circle cx="9" cy="10" r="6.4" fill="none" stroke="#e6e6e6" stroke-width="1.3"/><path d="M9 6V10.2H12.2M6.4 1.6H11.6M9 1.6V3.6M14.4 4.4L16 2.8" fill="none" stroke="#e6e6e6" stroke-linecap="round" stroke-linejoin="round" stroke-width="1.3"/></svg>
<div style="left:1299px;top:952.5px;width:111.2px;height:23.5px;background:#545454;border-radius:0px;"></div>
<div style="left:1318.7px;top:954px;line-height:20px;height:20px;color:#e6e6e6;white-space:pre;opacity:.999;">Start</div>
<div style="left:1092.3px;width:300px;text-align:right;top:954px;line-height:20px;height:20px;color:#e6e6e6;white-space:pre;opacity:.999;">1</div>
<div style="left:1411px;top:952.5px;width:112.7px;height:23.5px;background:#545454;border-radius:0 4px 4px 0;"></div>
<div style="left:1430.5px;top:954px;line-height:20px;height:20px;color:#e6e6e6;white-space:pre;opacity:.999;">Ende</div>
<div style="left:1206.0px;width:300px;text-align:right;top:954px;line-height:20px;height:20px;color:#e6e6e6;white-space:pre;opacity:.999;">250</div>
<div style="left:-47.8px;width:300px;text-align:center;top:984px;line-height:20px;height:20px;color:#c2c2c2;white-space:pre;opacity:.999;">10</div>
<div style="left:9.5px;width:300px;text-align:center;top:984px;line-height:20px;height:20px;color:#c2c2c2;white-space:pre;opacity:.999;">20</div>
<div style="left:66.8px;width:300px;text-align:center;top:984px;line-height:20px;height:20px;color:#c2c2c2;white-space:pre;opacity:.999;">30</div>
<div style="left:124.0px;width:300px;text-align:center;top:984px;line-height:20px;height:20px;color:#c2c2c2;white-space:pre;opacity:.999;">40</div>
<div style="left:181.2px;width:300px;text-align:center;top:984px;line-height:20px;height:20px;color:#c2c2c2;white-space:pre;opacity:.999;">50</div>
<div style="left:238.5px;width:300px;text-align:center;top:984px;line-height:20px;height:20px;color:#c2c2c2;white-space:pre;opacity:.999;">60</div>
<div style="left:295.8px;width:300px;text-align:center;top:984px;line-height:20px;height:20px;color:#c2c2c2;white-space:pre;opacity:.999;">70</div>
<div style="left:353.0px;width:300px;text-align:center;top:984px;line-height:20px;height:20px;color:#c2c2c2;white-space:pre;opacity:.999;">80</div>
<div style="left:410.2px;width:300px;text-align:center;top:984px;line-height:20px;height:20px;color:#c2c2c2;white-space:pre;opacity:.999;">90</div>
<div style="left:467.5px;width:300px;text-align:center;top:984px;line-height:20px;height:20px;color:#c2c2c2;white-space:pre;opacity:.999;">100</div>
<div style="left:524.8px;width:300px;text-align:center;top:984px;line-height:20px;height:20px;color:#c2c2c2;white-space:pre;opacity:.999;">110</div>
<div style="left:582.0px;width:300px;text-align:center;top:984px;line-height:20px;height:20px;color:#c2c2c2;white-space:pre;opacity:.999;">120</div>
<div style="left:639.2px;width:300px;text-align:center;top:984px;line-height:20px;height:20px;color:#c2c2c2;white-space:pre;opacity:.999;">130</div>
<div style="left:696.5px;width:300px;text-align:center;top:984px;line-height:20px;height:20px;color:#c2c2c2;white-space:pre;opacity:.999;">140</div>
<div style="left:753.8px;width:300px;text-align:center;top:984px;line-height:20px;height:20px;color:#c2c2c2;white-space:pre;opacity:.999;">150</div>
<div style="left:811.0px;width:300px;text-align:center;top:984px;line-height:20px;height:20px;color:#c2c2c2;white-space:pre;opacity:.999;">160</div>
<div style="left:868.2px;width:300px;text-align:center;top:984px;line-height:20px;height:20px;color:#c2c2c2;white-space:pre;opacity:.999;">170</div>
<div style="left:925.5px;width:300px;text-align:center;top:984px;line-height:20px;height:20px;color:#c2c2c2;white-space:pre;opacity:.999;">180</div>
<div style="left:982.8px;width:300px;text-align:center;top:984px;line-height:20px;height:20px;color:#c2c2c2;white-space:pre;opacity:.999;">190</div>
<div style="left:1040.0px;width:300px;text-align:center;top:984px;line-height:20px;height:20px;color:#c2c2c2;white-space:pre;opacity:.999;">200</div>
<div style="left:1097.2px;width:300px;text-align:center;top:984px;line-height:20px;height:20px;color:#c2c2c2;white-space:pre;opacity:.999;">210</div>
<div style="left:1154.5px;width:300px;text-align:center;top:984px;line-height:20px;height:20px;color:#c2c2c2;white-space:pre;opacity:.999;">220</div>
<div style="left:1211.8px;width:300px;text-align:center;top:984px;line-height:20px;height:20px;color:#c2c2c2;white-space:pre;opacity:.999;">230</div>
<div style="left:1269.0px;width:300px;text-align:center;top:984px;line-height:20px;height:20px;color:#c2c2c2;white-space:pre;opacity:.999;">240</div>
<div style="left:1326.2px;width:300px;text-align:center;top:984px;line-height:20px;height:20px;color:#c2c2c2;white-space:pre;opacity:.999;">250</div>
<svg style="left:0;top:1018.5px" width="1533" height="3"><rect x="44.5" y="0" width="1" height="3" fill="#2d2d2d"/><rect x="73.1" y="0" width="1" height="3" fill="#2d2d2d"/><rect x="101.8" y="0" width="1" height="3" fill="#2d2d2d"/><rect x="130.4" y="0" width="1" height="3" fill="#2d2d2d"/><rect x="159.0" y="0" width="1" height="3" fill="#2d2d2d"/><rect x="187.6" y="0" width="1" height="3" fill="#2d2d2d"/><rect x="216.2" y="0" width="1" height="3" fill="#2d2d2d"/><rect x="244.9" y="0" width="1" height="3" fill="#2d2d2d"/><rect x="273.5" y="0" width="1" height="3" fill="#2d2d2d"/><rect x="302.1" y="0" width="1" height="3" fill="#2d2d2d"/><rect x="330.8" y="0" width="1" height="3" fill="#2d2d2d"/><rect x="359.4" y="0" width="1" height="3" fill="#2d2d2d"/><rect x="388.0" y="0" width="1" height="3" fill="#2d2d2d"/><rect x="416.6" y="0" width="1" height="3" fill="#2d2d2d"/><rect x="445.2" y="0" width="1" height="3" fill="#2d2d2d"/><rect x="473.9" y="0" width="1" height="3" fill="#2d2d2d"/><rect x="502.5" y="0" width="1" height="3" fill="#2d2d2d"/><rect x="531.1" y="0" width="1" height="3" fill="#2d2d2d"/><rect x="559.8" y="0" width="1" height="3" fill="#2d2d2d"/><rect x="588.4" y="0" width="1" height="3" fill="#2d2d2d"/><rect x="617.0" y="0" width="1" height="3" fill="#2d2d2d"/><rect x="645.6" y="0" width="1" height="3" fill="#2d2d2d"/><rect x="674.2" y="0" width="1" height="3" fill="#2d2d2d"/><rect x="702.9" y="0" width="1" height="3" fill="#2d2d2d"/><rect x="731.5" y="0" width="1" height="3" fill="#2d2d2d"/><rect x="760.1" y="0" width="1" height="3" fill="#2d2d2d"/><rect x="788.8" y="0" width="1" height="3" fill="#2d2d2d"/><rect x="817.4" y="0" width="1" height="3" fill="#2d2d2d"/><rect x="846.0" y="0" width="1" height="3" fill="#2d2d2d"/><rect x="874.6" y="0" width="1" height="3" fill="#2d2d2d"/><rect x="903.2" y="0" width="1" height="3" fill="#2d2d2d"/><rect x="931.9" y="0" width="1" height="3" fill="#2d2d2d"/><rect x="960.5" y="0" width="1" height="3" fill="#2d2d2d"/><rect x="989.1" y="0" width="1" height="3" fill="#2d2d2d"/><rect x="1017.7" y="0" width="1" height="3" fill="#2d2d2d"/><rect x="1046.4" y="0" width="1" height="3" fill="#2d2d2d"/><rect x="1075.0" y="0" width="1" height="3" fill="#2d2d2d"/><rect x="1103.6" y="0" width="1" height="3" fill="#2d2d2d"/><rect x="1132.2" y="0" width="1" height="3" fill="#2d2d2d"/><rect x="1160.9" y="0" width="1" height="3" fill="#2d2d2d"/><rect x="1189.5" y="0" width="1" height="3" fill="#2d2d2d"/><rect x="1218.1" y="0" width="1" height="3" fill="#2d2d2d"/><rect x="1246.8" y="0" width="1" height="3" fill="#2d2d2d"/><rect x="1275.4" y="0" width="1" height="3" fill="#2d2d2d"/><rect x="1304.0" y="0" width="1" height="3" fill="#2d2d2d"/><rect x="1332.6" y="0" width="1" height="3" fill="#2d2d2d"/><rect x="1361.2" y="0" width="1" height="3" fill="#2d2d2d"/><rect x="1389.9" y="0" width="1" height="3" fill="#2d2d2d"/><rect x="1418.5" y="0" width="1" height="3" fill="#2d2d2d"/><rect x="1447.1" y="0" width="1" height="3" fill="#2d2d2d"/><rect x="1475.8" y="0" width="1" height="3" fill="#2d2d2d"/><rect x="1504.4" y="0" width="1" height="3" fill="#2d2d2d"/></svg>
<div style="left:4.5px;top:1008px;width:1518px;height:10.7px;background:#575757;border-radius:5.4px;"></div>
<div style="left:5.5px;top:1009.3px;width:8px;height:8px;border-radius:50%;background:#2a2a2a"></div>
<div style="left:1513px;top:1009.3px;width:8px;height:8px;border-radius:50%;background:#2a2a2a"></div>
<div style="left:49.3px;top:1003px;width:1.6px;height:18.2px;background:#4772b3;border-radius:0px;"></div>
<div style="left:35.7px;top:983px;width:29.8px;height:20.7px;background:#4772b3;border-radius:4px;"></div>
<div style="left:-99.4px;width:300px;text-align:center;top:984px;line-height:20px;height:20px;color:#ffffff;white-space:pre;opacity:.999;">1</div>
<div style="left:1526px;top:991px;width:7px;height:29px;background:#2b2b2b;border-radius:3px 0 0 3px;"></div>
<svg style="left:1527.5px;top:1000px" width="4.5" height="9" viewBox="0 0 6 10"><path d="M5 1L1 5L5 9" fill="none" stroke="#555" stroke-linecap="round" stroke-linejoin="round" stroke-width="1.4"/></svg>
<div style="left:0px;top:1021.2px;width:1858px;height:26px;background:#1a1a1a;border-radius:0px;"></div>
<svg style="left:7.5px;top:1026px" width="14.5" height="19" viewBox="0 0 14.5 19"><rect x=".8" y=".8" width="12.9" height="17.4" rx="4.6" fill="none" stroke="#9a9a9a" stroke-width="1.3"/><path d="M1 8V5.2C1 2.6 3 1 5.4 1H7V8Z" fill="#9a9a9a"/></svg>
<div style="left:36.7px;top:1025px;line-height:20px;height:20px;color:#9a9a9a;white-space:pre;opacity:.999;">Auswählen</div>
<svg style="left:289px;top:1026px" width="14.5" height="19" viewBox="0 0 14.5 19"><rect x=".8" y=".8" width="12.9" height="17.4" rx="4.6" fill="none" stroke="#9a9a9a" stroke-width="1.3"/><rect x="5.4" y="3" width="3.7" height="6" rx="1.2" fill="#9a9a9a"/></svg>
<div style="left:317.7px;top:1025px;line-height:20px;height:20px;color:#9a9a9a;white-space:pre;opacity:.999;">Ansicht drehen</div>
<svg style="left:570px;top:1026px" width="14.5" height="19" viewBox="0 0 14.5 19"><rect x=".8" y=".8" width="12.9" height="17.4" rx="4.6" fill="none" stroke="#9a9a9a" stroke-width="1.3"/><path d="M13.5 8V5.2C13.5 2.6 11.5 1 9.1 1H7.5V8Z" fill="#9a9a9a"/></svg>
<div style="left:599px;top:1025px;line-height:20px;height:20px;color:#9a9a9a;white-space:pre;opacity:.999;">Objekt</div>
<div style="left:1542.0px;width:300px;text-align:right;top:1025px;line-height:20px;height:20px;color:#9a9a9a;white-space:pre;opacity:.999;">4.0.2</div>
<div style="left:1535.8px;top:36px;width:320.8px;height:315.2px;background:#282828;border-radius:5px;overflow:hidden;">
<div style="left:0.0px;top:0.0px;width:320.79999999999995px;height:32.5px;background:#303030;border-radius:0px;"></div>
<div style="left:0.0px;top:57.5px;width:320.79999999999995px;height:25px;background:#2b2b2b;border-radius:0px;"></div>
<div style="left:0.0px;top:107.5px;width:320.79999999999995px;height:25px;background:#2b2b2b;border-radius:0px;"></div>
<div style="left:0.0px;top:157.5px;width:320.79999999999995px;height:25px;background:#2b2b2b;border-radius:0px;"></div>
<div style="left:0.0px;top:207.5px;width:320.79999999999995px;height:25px;background:#2b2b2b;border-radius:0px;"></div>
<div style="left:0.0px;top:257.5px;width:320.79999999999995px;height:25px;background:#2b2b2b;border-radius:0px;"></div>
<div style="left:0.0px;top:307.5px;width:320.79999999999995px;height:25px;background:#2b2b2b;border-radius:0px;"></div>
</div>
<div style="left:1546.7px;top:39.6px;width:39px;height:23.5px;background:#282828;border-radius:4.5px;border:1px solid #3d3d3d;box-sizing:border-box;"></div>
<svg style="left:1551.5px;top:42.5px" width="18" height="18" viewBox="0 0 18 18"><rect x="1" y="1.4" width="6.6" height="3.6" rx=".7" fill="#e6e6e6"/><rect x="8.6" y="7" width="8.4" height="3.8" rx=".7" fill="#e6e6e6"/><rect x="8.6" y="12.8" width="8.4" height="3.8" rx=".7" fill="#e6e6e6"/><path d="M3.8 6.4V14.8H7M3.8 9H7" fill="none" stroke="#e6e6e6" stroke-linecap="butt" stroke-linejoin="miter" stroke-width="1.1"/></svg>
<svg style="left:1573.5px;top:48px" width="9" height="8" viewBox="0 0 9 8"><path d="M1.3 2.3L4.5 5.6L7.7 2.3" fill="none" stroke="#e6e6e6" stroke-linecap="round" stroke-linejoin="round" stroke-width="1.35"/></svg>
<div style="left:1592.6px;top:39.6px;width:39px;height:23.5px;background:#282828;border-radius:4.5px;border:1px solid #3d3d3d;box-sizing:border-box;"></div>
<svg style="left:1597px;top:42.5px" width="17" height="17" viewBox="0 0 17 17"><rect x="5.2" y="1.2" width="10.6" height="10.6" rx="1.2" fill="none" stroke="#e6e6e6" stroke-width="1.2"/><path d="M6 11L9.4 5.6L11.6 8.6L12.8 7.4L15 11Z" fill="#e6e6e6"/><circle cx="13.2" cy="4" r="1" fill="#e6e6e6"/><path d="M3.2 3.6V13.8H13.4M1.2 5.8V15.8H11.2" fill="none" stroke="#e6e6e6" stroke-linecap="round" stroke-linejoin="round" stroke-width="1.1"/></svg>
<svg style="left:1619px;top:48px" width="9" height="8" viewBox="0 0 9 8"><path d="M1.3 2.3L4.5 5.6L7.7 2.3" fill="none" stroke="#e6e6e6" stroke-linecap="round" stroke-linejoin="round" stroke-width="1.35"/></svg>
<div style="left:1651.6px;top:39.6px;width:143px;height:23.5px;background:#1d1d1d;border-radius:4.5px;border:1px solid #3d3d3d;box-sizing:border-box;"></div>
<svg style="left:1656px;top:42.5px" width="18" height="18" viewBox="0 0 18 18"><circle cx="11" cy="7" r="5.1" fill="none" stroke="#e6e6e6" stroke-width="1.3"/><path d="M7.4 10.8L1.8 16.4" stroke="#e6e6e6" stroke-width="1.5" stroke-linecap="round"/></svg>
<div style="left:1814.6px;top:39.6px;width:39px;height:23.5px;background:#282828;border-radius:4.5px;border:1px solid #3d3d3d;box-sizing:border-box;"></div>
<svg style="left:1819.5px;top:42.5px" width="18" height="18" viewBox="0 0 18 18"><path d="M1.6 2.4H16.4L10.6 9.4V15.8L7.4 13.6V9.4Z" fill="none" stroke="#e6e6e6" stroke-linecap="round" stroke-linejoin="round" stroke-width="1.3"/></svg>
<svg style="left:1841px;top:48px" width="9" height="8" viewBox="0 0 9 8"><path d="M1.3 2.3L4.5 5.6L7.7 2.3" fill="none" stroke="#e6e6e6" stroke-linecap="round" stroke-linejoin="round" stroke-width="1.35"/></svg>
<svg style="left:1565px;top:72.7px" width="17" height="16.5" viewBox="0 0 17 16.5"><rect x=".2" y=".2" width="16.6" height="4" rx=".6" fill="#e6e6e6"/><path d="M1.4 5.4H15.6V15.6Q15.6 16.3 14.9 16.3H2.1Q1.4 16.3 1.4 15.6Z" fill="#e6e6e6"/><rect x="5.4" y="7.6" width="6.2" height="2.2" rx="1.1" fill="#282828"/></svg>
<div style="left:1591.3px;top:72px;line-height:20px;height:20px;color:#c8c8c8;white-space:pre;opacity:.999;">Szenensammlung</div>
<svg style="left:1569px;top:102.5px" width="8" height="7" viewBox="0 0 8 7"><path d="M.2.4H7.8L4 6.8Z" fill="#b4b4b4"/></svg>
<div style="left:1586px;top:94.4px;width:24.8px;height:22.4px;background:#4d4d4d;border-radius:5px;border:1px solid #6e6e6e;box-sizing:border-box;"></div>
<svg style="left:1590px;top:98px" width="17" height="16.5" viewBox="0 0 17 16.5"><rect x=".2" y=".2" width="16.6" height="4" rx=".6" fill="#e6e6e6"/><path d="M1.4 5.4H15.6V15.6Q15.6 16.3 14.9 16.3H2.1Q1.4 16.3 1.4 15.6Z" fill="#e6e6e6"/><rect x="5.4" y="7.6" width="6.2" height="2.2" rx="1.1" fill="#282828"/></svg>
<div style="left:1616.5px;top:97px;line-height:20px;height:20px;color:#c8c8c8;white-space:pre;opacity:.999;">Collection</div>
<div style="left:1776.8px;top:99.2px;width:13.4px;height:13px;background:#e6e6e6;border-radius:3px;"></div>
<svg style="left:1778.3px;top:101px" width="10.5" height="9.5" viewBox="0 0 10.5 9.5"><path d="M1.4 4.8L4 7.6L9.2 1.6" fill="none" stroke="#1d1d1d" stroke-width="2.1"/></svg>
<svg style="left:1799.7px;top:100.0px" width="16.3" height="11" viewBox="0 0 16.3 11"><path d="M.3 5.5C4 -1.2 12.3 -1.2 16 5.5C12.3 12.2 4 12.2 .3 5.5Z" fill="#e6e6e6"/><circle cx="8.15" cy="5.3" r="3.6" fill="#282828"/><circle cx="8.15" cy="5.3" r="1.9" fill="#e6e6e6"/></svg>
<svg style="left:1824.8px;top:98.0px" width="16.2" height="14.5" viewBox="0 0 16.2 14.5"><path d="M4.8 2.2L5.8.3H10.4L11.4 2.2H15Q16 2.2 16 3.2V13.4Q16 14.3 15 14.3H1.2Q.2 14.3 .2 13.4V3.2Q.2 2.2 1.2 2.2Z" fill="#e6e6e6"/><circle cx="8.1" cy="8.2" r="4.3" fill="#282828"/><circle cx="8.1" cy="8.2" r="2.9" fill="#e6e6e6"/><circle cx="8.1" cy="8.2" r="1.7" fill="#282828"/></svg>
<div style="left:1572px;top:124.5px;width:1px;height:227px;background:#4a4a4a;border-radius:0px;"></div>
<svg style="left:1595px;top:127.30000000000001px" width="7.5" height="7.5" viewBox="0 0 7.5 7.5"><path d="M.6.2V7.3L7.2 3.75Z" fill="#b4b4b4"/></svg>
<svg style="left:1614.7px;top:122.10000000000001px" width="17.7" height="17.2" viewBox="0 0 17.7 17.2"><path d="M2.4 2.2H15.3L8.85 14.8Z" fill="none" stroke="#cc8b52" stroke-width="3.3" stroke-linejoin="round"/></svg>
<div style="left:1641.2px;top:121px;line-height:20px;height:20px;color:#c8c8c8;white-space:pre;opacity:.999;">obj_0</div>
<svg style="left:1704.8px;top:121.80000000000001px" width="17.6" height="18" viewBox="0 0 17.6 18"><path d="M2.4 2.4H15.2L8.8 15.4Z" fill="none" stroke="#00d9a3" stroke-width="1.15"/><rect x=".7" y=".7" width="3.4" height="3.4" fill="#282828" stroke="#00d9a3" stroke-width="1.1"/><rect x="13.5" y=".7" width="3.4" height="3.4" fill="#282828" stroke="#00d9a3" stroke-width="1.1"/><rect x="7.1" y="13.7" width="3.4" height="3.4" fill="#282828" stroke="#00d9a3" stroke-width="1.1"/></svg>
<svg style="left:1799.7px;top:125.0px" width="16.3" height="11" viewBox="0 0 16.3 11"><path d="M.3 5.5C4 -1.2 12.3 -1.2 16 5.5C12.3 12.2 4 12.2 .3 5.5Z" fill="#e6e6e6"/><circle cx="8.15" cy="5.3" r="3.6" fill="#282828"/><circle cx="8.15" cy="5.3" r="1.9" fill="#e6e6e6"/></svg>
<svg style="left:1824.8px;top:123.0px" width="16.2" height="14.5" viewBox="0 0 16.2 14.5"><path d="M4.8 2.2L5.8.3H10.4L11.4 2.2H15Q16 2.2 16 3.2V13.4Q16 14.3 15 14.3H1.2Q.2 14.3 .2 13.4V3.2Q.2 2.2 1.2 2.2Z" fill="#e6e6e6"/><circle cx="8.1" cy="8.2" r="4.3" fill="#282828"/><circle cx="8.1" cy="8.2" r="2.9" fill="#e6e6e6"/><circle cx="8.1" cy="8.2" r="1.7" fill="#282828"/></svg>
<svg style="left:1595px;top:152.3px" width="7.5" height="7.5" viewBox="0 0 7.5 7.5"><path d="M.6.2V7.3L7.2 3.75Z" fill="#b4b4b4"/></svg>
<svg style="left:1614.7px;top:147.10000000000002px" width="17.7" height="17.2" viewBox="0 0 17.7 17.2"><path d="M2.4 2.2H15.3L8.85 14.8Z" fill="none" stroke="#cc8b52" stroke-width="3.3" stroke-linejoin="round"/></svg>
<div style="left:1641.2px;top:146px;line-height:20px;height:20px;color:#c8c8c8;white-space:pre;opacity:.999;">obj_1</div>
<svg style="left:1704.8px;top:146.8px" width="17.6" height="18" viewBox="0 0 17.6 18"><path d="M2.4 2.4H15.2L8.8 15.4Z" fill="none" stroke="#00d9a3" stroke-width="1.15"/><rect x=".7" y=".7" width="3.4" height="3.4" fill="#282828" stroke="#00d9a3" stroke-width="1.1"/><rect x="13.5" y=".7" width="3.4" height="3.4" fill="#282828" stroke="#00d9a3" stroke-width="1.1"/><rect x="7.1" y="13.7" width="3.4" height="3.4" fill="#282828" stroke="#00d9a3" stroke-width="1.1"/></svg>
<svg style="left:1799.7px;top:150.0px" width="16.3" height="11" viewBox="0 0 16.3 11"><path d="M.3 5.5C4 -1.2 12.3 -1.2 16 5.5C12.3 12.2 4 12.2 .3 5.5Z" fill="#e6e6e6"/><circle cx="8.15" cy="5.3" r="3.6" fill="#282828"/><circle cx="8.15" cy="5.3" r="1.9" fill="#e6e6e6"/></svg>
<svg style="left:1824.8px;top:148.0px" width="16.2" height="14.5" viewBox="0 0 16.2 14.5"><path d="M4.8 2.2L5.8.3H10.4L11.4 2.2H15Q16 2.2 16 3.2V13.4Q16 14.3 15 14.3H1.2Q.2 14.3 .2 13.4V3.2Q.2 2.2 1.2 2.2Z" fill="#e6e6e6"/><circle cx="8.1" cy="8.2" r="4.3" fill="#282828"/><circle cx="8.1" cy="8.2" r="2.9" fill="#e6e6e6"/><circle cx="8.1" cy="8.2" r="1.7" fill="#282828"/></svg>
<svg style="left:1595px;top:177.3px" width="7.5" height="7.5" viewBox="0 0 7.5 7.5"><path d="M.6.2V7.3L7.2 3.75Z" fill="#b4b4b4"/></svg>
<svg style="left:1614.7px;top:172.10000000000002px" width="17.7" height="17.2" viewBox="0 0 17.7 17.2"><path d="M2.4 2.2H15.3L8.85 14.8Z" fill="none" stroke="#cc8b52" stroke-width="3.3" stroke-linejoin="round"/></svg>
<div style="left:1641.2px;top:171px;line-height:20px;height:20px;color:#c8c8c8;white-space:pre;opacity:.999;">obj_2</div>
<svg style="left:1704.8px;top:171.8px" width="17.6" height="18" viewBox="0 0 17.6 18"><path d="M2.4 2.4H15.2L8.8 15.4Z" fill="none" stroke="#00d9a3" stroke-width="1.15"/><rect x=".7" y=".7" width="3.4" height="3.4" fill="#282828" stroke="#00d9a3" stroke-width="1.1"/><rect x="13.5" y=".7" width="3.4" height="3.4" fill="#282828" stroke="#00d9a3" stroke-width="1.1"/><rect x="7.1" y="13.7" width="3.4" height="3.4" fill="#282828" stroke="#00d9a3" stroke-width="1.1"/></svg>
<svg style="left:1799.7px;top:175.0px" width="16.3" height="11" viewBox="0 0 16.3 11"><path d="M.3 5.5C4 -1.2 12.3 -1.2 16 5.5C12.3 12.2 4 12.2 .3 5.5Z" fill="#e6e6e6"/><circle cx="8.15" cy="5.3" r="3.6" fill="#282828"/><circle cx="8.15" cy="5.3" r="1.9" fill="#e6e6e6"/></svg>
<svg style="left:1824.8px;top:173.0px" width="16.2" height="14.5" viewBox="0 0 16.2 14.5"><path d="M4.8 2.2L5.8.3H10.4L11.4 2.2H15Q16 2.2 16 3.2V13.4Q16 14.3 15 14.3H1.2Q.2 14.3 .2 13.4V3.2Q.2 2.2 1.2 2.2Z" fill="#e6e6e6"/><circle cx="8.1" cy="8.2" r="4.3" fill="#282828"/><circle cx="8.1" cy="8.2" r="2.9" fill="#e6e6e6"/><circle cx="8.1" cy="8.2" r="1.7" fill="#282828"/></svg>
<svg style="left:1595px;top:202.3px" width="7.5" height="7.5" viewBox="0 0 7.5 7.5"><path d="M.6.2V7.3L7.2 3.75Z" fill="#b4b4b4"/></svg>
<svg style="left:1614.7px;top:197.10000000000002px" width="17.7" height="17.2" viewBox="0 0 17.7 17.2"><path d="M2.4 2.2H15.3L8.85 14.8Z" fill="none" stroke="#cc8b52" stroke-width="3.3" stroke-linejoin="round"/></svg>
<div style="left:1641.2px;top:196px;line-height:20px;height:20px;color:#c8c8c8;white-space:pre;opacity:.999;">obj_3</div>
<svg style="left:1704.8px;top:196.8px" width="17.6" height="18" viewBox="0 0 17.6 18"><path d="M2.4 2.4H15.2L8.8 15.4Z" fill="none" stroke="#00d9a3" stroke-width="1.15"/><rect x=".7" y=".7" width="3.4" height="3.4" fill="#282828" stroke="#00d9a3" stroke-width="1.1"/><rect x="13.5" y=".7" width="3.4" height="3.4" fill="#282828" stroke="#00d9a3" stroke-width="1.1"/><rect x="7.1" y="13.7" width="3.4" height="3.4" fill="#282828" stroke="#00d9a3" stroke-width="1.1"/></svg>
<svg style="left:1799.7px;top:200.0px" width="16.3" height="11" viewBox="0 0 16.3 11"><path d="M.3 5.5C4 -1.2 12.3 -1.2 16 5.5C12.3 12.2 4 12.2 .3 5.5Z" fill="#e6e6e6"/><circle cx="8.15" cy="5.3" r="3.6" fill="#282828"/><circle cx="8.15" cy="5.3" r="1.9" fill="#e6e6e6"/></svg>
<svg style="left:1824.8px;top:198.0px" width="16.2" height="14.5" viewBox="0 0 16.2 14.5"><path d="M4.8 2.2L5.8.3H10.4L11.4 2.2H15Q16 2.2 16 3.2V13.4Q16 14.3 15 14.3H1.2Q.2 14.3 .2 13.4V3.2Q.2 2.2 1.2 2.2Z" fill="#e6e6e6"/><circle cx="8.1" cy="8.2" r="4.3" fill="#282828"/><circle cx="8.1" cy="8.2" r="2.9" fill="#e6e6e6"/><circle cx="8.1" cy="8.2" r="1.7" fill="#282828"/></svg>
<svg style="left:1595px;top:227.3px" width="7.5" height="7.5" viewBox="0 0 7.5 7.5"><path d="M.6.2V7.3L7.2 3.75Z" fill="#b4b4b4"/></svg>
<svg style="left:1614.7px;top:222.10000000000002px" width="17.7" height="17.2" viewBox="0 0 17.7 17.2"><path d="M2.4 2.2H15.3L8.85 14.8Z" fill="none" stroke="#cc8b52" stroke-width="3.3" stroke-linejoin="round"/></svg>
<div style="left:1641.2px;top:221px;line-height:20px;height:20px;color:#c8c8c8;white-space:pre;opacity:.999;">obj_4</div>
<svg style="left:1704.8px;top:221.8px" width="17.6" height="18" viewBox="0 0 17.6 18"><path d="M2.4 2.4H15.2L8.8 15.4Z" fill="none" stroke="#00d9a3" stroke-width="1.15"/><rect x=".7" y=".7" width="3.4" height="3.4" fill="#282828" stroke="#00d9a3" stroke-width="1.1"/><rect x="13.5" y=".7" width="3.4" height="3.4" fill="#282828" stroke="#00d9a3" stroke-width="1.1"/><rect x="7.1" y="13.7" width="3.4" height="3.4" fill="#282828" stroke="#00d9a3" stroke-width="1.1"/></svg>
<svg style="left:1799.7px;top:225.0px" width="16.3" height="11" viewBox="0 0 16.3 11"><path d="M.3 5.5C4 -1.2 12.3 -1.2 16 5.5C12.3 12.2 4 12.2 .3 5.5Z" fill="#e6e6e6"/><circle cx="8.15" cy="5.3" r="3.6" fill="#282828"/><circle cx="8.15" cy="5.3" r="1.9" fill="#e6e6e6"/></svg>
<svg style="left:1824.8px;top:223.0px" width="16.2" height="14.5" viewBox="0 0 16.2 14.5"><path d="M4.8 2.2L5.8.3H10.4L11.4 2.2H15Q16 2.2 16 3.2V13.4Q16 14.3 15 14.3H1.2Q.2 14.3 .2 13.4V3.2Q.2 2.2 1.2 2.2Z" fill="#e6e6e6"/><circle cx="8.1" cy="8.2" r="4.3" fill="#282828"/><circle cx="8.1" cy="8.2" r="2.9" fill="#e6e6e6"/><circle cx="8.1" cy="8.2" r="1.7" fill="#282828"/></svg>
<svg style="left:1595px;top:252.3px" width="7.5" height="7.5" viewBox="0 0 7.5 7.5"><path d="M.6.2V7.3L7.2 3.75Z" fill="#b4b4b4"/></svg>
<svg style="left:1614.7px;top:247.10000000000002px" width="17.7" height="17.2" viewBox="0 0 17.7 17.2"><path d="M2.4 2.2H15.3L8.85 14.8Z" fill="none" stroke="#cc8b52" stroke-width="3.3" stroke-linejoin="round"/></svg>
<div style="left:1641.2px;top:246px;line-height:20px;height:20px;color:#c8c8c8;white-space:pre;opacity:.999;">obj_5</div>
<svg style="left:1704.8px;top:246.8px" width="17.6" height="18" viewBox="0 0 17.6 18"><path d="M2.4 2.4H15.2L8.8 15.4Z" fill="none" stroke="#00d9a3" stroke-width="1.15"/><rect x=".7" y=".7" width="3.4" height="3.4" fill="#282828" stroke="#00d9a3" stroke-width="1.1"/><rect x="13.5" y=".7" width="3.4" height="3.4" fill="#282828" stroke="#00d9a3" stroke-width="1.1"/><rect x="7.1" y="13.7" width="3.4" height="3.4" fill="#282828" stroke="#00d9a3" stroke-width="1.1"/></svg>
<svg style="left:1799.7px;top:250.0px" width="16.3" height="11" viewBox="0 0 16.3 11"><path d="M.3 5.5C4 -1.2 12.3 -1.2 16 5.5C12.3 12.2 4 12.2 .3 5.5Z" fill="#e6e6e6"/><circle cx="8.15" cy="5.3" r="3.6" fill="#282828"/><circle cx="8.15" cy="5.3" r="1.9" fill="#e6e6e6"/></svg>
<svg style="left:1824.8px;top:248.0px" width="16.2" height="14.5" viewBox="0 0 16.2 14.5"><path d="M4.8 2.2L5.8.3H10.4L11.4 2.2H15Q16 2.2 16 3.2V13.4Q16 14.3 15 14.3H1.2Q.2 14.3 .2 13.4V3.2Q.2 2.2 1.2 2.2Z" fill="#e6e6e6"/><circle cx="8.1" cy="8.2" r="4.3" fill="#282828"/><circle cx="8.1" cy="8.2" r="2.9" fill="#e6e6e6"/><circle cx="8.1" cy="8.2" r="1.7" fill="#282828"/></svg>
<svg style="left:1595px;top:277.3px" width="7.5" height="7.5" viewBox="0 0 7.5 7.5"><path d="M.6.2V7.3L7.2 3.75Z" fill="#b4b4b4"/></svg>
<svg style="left:1614.7px;top:272.1px" width="17.7" height="17.2" viewBox="0 0 17.7 17.2"><path d="M2.4 2.2H15.3L8.85 14.8Z" fill="none" stroke="#cc8b52" stroke-width="3.3" stroke-linejoin="round"/></svg>
<div style="left:1641.2px;top:271px;line-height:20px;height:20px;color:#c8c8c8;white-space:pre;opacity:.999;">obj_6</div>
<svg style="left:1704.8px;top:271.8px" width="17.6" height="18" viewBox="0 0 17.6 18"><path d="M2.4 2.4H15.2L8.8 15.4Z" fill="none" stroke="#00d9a3" stroke-width="1.15"/><rect x=".7" y=".7" width="3.4" height="3.4" fill="#282828" stroke="#00d9a3" stroke-width="1.1"/><rect x="13.5" y=".7" width="3.4" height="3.4" fill="#282828" stroke="#00d9a3" stroke-width="1.1"/><rect x="7.1" y="13.7" width="3.4" height="3.4" fill="#282828" stroke="#00d9a3" stroke-width="1.1"/></svg>
<svg style="left:1799.7px;top:275.0px" width="16.3" height="11" viewBox="0 0 16.3 11"><path d="M.3 5.5C4 -1.2 12.3 -1.2 16 5.5C12.3 12.2 4 12.2 .3 5.5Z" fill="#e6e6e6"/><circle cx="8.15" cy="5.3" r="3.6" fill="#282828"/><circle cx="8.15" cy="5.3" r="1.9" fill="#e6e6e6"/></svg>
<svg style="left:1824.8px;top:273.0px" width="16.2" height="14.5" viewBox="0 0 16.2 14.5"><path d="M4.8 2.2L5.8.3H10.4L11.4 2.2H15Q16 2.2 16 3.2V13.4Q16 14.3 15 14.3H1.2Q.2 14.3 .2 13.4V3.2Q.2 2.2 1.2 2.2Z" fill="#e6e6e6"/><circle cx="8.1" cy="8.2" r="4.3" fill="#282828"/><circle cx="8.1" cy="8.2" r="2.9" fill="#e6e6e6"/><circle cx="8.1" cy="8.2" r="1.7" fill="#282828"/></svg>
<svg style="left:1595px;top:302.3px" width="7.5" height="7.5" viewBox="0 0 7.5 7.5"><path d="M.6.2V7.3L7.2 3.75Z" fill="#b4b4b4"/></svg>
<svg style="left:1614.7px;top:297.1px" width="17.7" height="17.2" viewBox="0 0 17.7 17.2"><path d="M2.4 2.2H15.3L8.85 14.8Z" fill="none" stroke="#cc8b52" stroke-width="3.3" stroke-linejoin="round"/></svg>
<div style="left:1641.2px;top:296px;line-height:20px;height:20px;color:#c8c8c8;white-space:pre;opacity:.999;">obj_7</div>
<svg style="left:1704.8px;top:296.8px" width="17.6" height="18" viewBox="0 0 17.6 18"><path d="M2.4 2.4H15.2L8.8 15.4Z" fill="none" stroke="#00d9a3" stroke-width="1.15"/><rect x=".7" y=".7" width="3.4" height="3.4" fill="#282828" stroke="#00d9a3" stroke-width="1.1"/><rect x="13.5" y=".7" width="3.4" height="3.4" fill="#282828" stroke="#00d9a3" stroke-width="1.1"/><rect x="7.1" y="13.7" width="3.4" height="3.4" fill="#282828" stroke="#00d9a3" stroke-width="1.1"/></svg>
<svg style="left:1799.7px;top:300.0px" width="16.3" height="11" viewBox="0 0 16.3 11"><path d="M.3 5.5C4 -1.2 12.3 -1.2 16 5.5C12.3 12.2 4 12.2 .3 5.5Z" fill="#e6e6e6"/><circle cx="8.15" cy="5.3" r="3.6" fill="#282828"/><circle cx="8.15" cy="5.3" r="1.9" fill="#e6e6e6"/></svg>
<svg style="left:1824.8px;top:298.0px" width="16.2" height="14.5" viewBox="0 0 16.2 14.5"><path d="M4.8 2.2L5.8.3H10.4L11.4 2.2H15Q16 2.2 16 3.2V13.4Q16 14.3 15 14.3H1.2Q.2 14.3 .2 13.4V3.2Q.2 2.2 1.2 2.2Z" fill="#e6e6e6"/><circle cx="8.1" cy="8.2" r="4.3" fill="#282828"/><circle cx="8.1" cy="8.2" r="2.9" fill="#e6e6e6"/><circle cx="8.1" cy="8.2" r="1.7" fill="#282828"/></svg>
<svg style="left:1595px;top:327.3px" width="7.5" height="7.5" viewBox="0 0 7.5 7.5"><path d="M.6.2V7.3L7.2 3.75Z" fill="#b4b4b4"/></svg>
<svg style="left:1614.7px;top:322.1px" width="17.7" height="17.2" viewBox="0 0 17.7 17.2"><path d="M2.4 2.2H15.3L8.85 14.8Z" fill="none" stroke="#cc8b52" stroke-width="3.3" stroke-linejoin="round"/></svg>
<div style="left:1641.2px;top:321px;line-height:20px;height:20px;color:#c8c8c8;white-space:pre;opacity:.999;">obj_8</div>
<svg style="left:1704.8px;top:321.8px" width="17.6" height="18" viewBox="0 0 17.6 18"><path d="M2.4 2.4H15.2L8.8 15.4Z" fill="none" stroke="#00d9a3" stroke-width="1.15"/><rect x=".7" y=".7" width="3.4" height="3.4" fill="#282828" stroke="#00d9a3" stroke-width="1.1"/><rect x="13.5" y=".7" width="3.4" height="3.4" fill="#282828" stroke="#00d9a3" stroke-width="1.1"/><rect x="7.1" y="13.7" width="3.4" height="3.4" fill="#282828" stroke="#00d9a3" stroke-width="1.1"/></svg>
<svg style="left:1799.7px;top:325.0px" width="16.3" height="11" viewBox="0 0 16.3 11"><path d="M.3 5.5C4 -1.2 12.3 -1.2 16 5.5C12.3 12.2 4 12.2 .3 5.5Z" fill="#e6e6e6"/><circle cx="8.15" cy="5.3" r="3.6" fill="#282828"/><circle cx="8.15" cy="5.3" r="1.9" fill="#e6e6e6"/></svg>
<svg style="left:1824.8px;top:323.0px" width="16.2" height="14.5" viewBox="0 0 16.2 14.5"><path d="M4.8 2.2L5.8.3H10.4L11.4 2.2H15Q16 2.2 16 3.2V13.4Q16 14.3 15 14.3H1.2Q.2 14.3 .2 13.4V3.2Q.2 2.2 1.2 2.2Z" fill="#e6e6e6"/><circle cx="8.1" cy="8.2" r="4.3" fill="#282828"/><circle cx="8.1" cy="8.2" r="2.9" fill="#e6e6e6"/><circle cx="8.1" cy="8.2" r="1.7" fill="#282828"/></svg>
<div style="left:1535.8px;top:344px;width:320.8px;height:7.2px;overflow:hidden;border-radius:0 0 5px 5px;">
<div style="left:76.7px;top:3px;width:24.8px;height:22.4px;background:#4d4d4d;border-radius:5px;border:1px solid #6e6e6e;box-sizing:border-box;"></div>
<svg style="left:80.20000000000005px;top:5.5px" width="17.7" height="17.2" viewBox="0 0 17.7 17.2"><path d="M2.4 2.2H15.3L8.85 14.8Z" fill="none" stroke="#cc8b52" stroke-width="3.3" stroke-linejoin="round"/></svg>
<svg style="left:169.0px;top:4px" width="17.6" height="18" viewBox="0 0 17.6 18"><path d="M2.4 2.4H15.2L8.8 15.4Z" fill="none" stroke="#00d9a3" stroke-width="1.15"/><rect x=".7" y=".7" width="3.4" height="3.4" fill="#282828" stroke="#00d9a3" stroke-width="1.1"/><rect x="13.5" y=".7" width="3.4" height="3.4" fill="#282828" stroke="#00d9a3" stroke-width="1.1"/><rect x="7.1" y="13.7" width="3.4" height="3.4" fill="#282828" stroke="#00d9a3" stroke-width="1.1"/></svg>
<svg style="left:263.9000000000001px;top:6.5px" width="16.3" height="11" viewBox="0 0 16.3 11"><path d="M.3 5.5C4 -1.2 12.3 -1.2 16 5.5C12.3 12.2 4 12.2 .3 5.5Z" fill="#e6e6e6"/><circle cx="8.15" cy="5.3" r="3.6" fill="#282828"/><circle cx="8.15" cy="5.3" r="1.9" fill="#e6e6e6"/></svg>
<svg style="left:289.0px;top:5px" width="16.2" height="14.5" viewBox="0 0 16.2 14.5"><path d="M4.8 2.2L5.8.3H10.4L11.4 2.2H15Q16 2.2 16 3.2V13.4Q16 14.3 15 14.3H1.2Q.2 14.3 .2 13.4V3.2Q.2 2.2 1.2 2.2Z" fill="#e6e6e6"/><circle cx="8.1" cy="8.2" r="4.3" fill="#282828"/><circle cx="8.1" cy="8.2" r="2.9" fill="#e6e6e6"/><circle cx="8.1" cy="8.2" r="1.7" fill="#282828"/></svg>
</div>
<div style="left:1850px;top:78.5px;width:4.8px;height:53px;background:#4f4f4f;border-radius:2.4px;"></div>
<div style="left:1535.8px;top:354.7px;width:320.79999999999995px;height:666.5px;background:#303030;border-radius:5px;"></div>
<div style="left:1546.4px;top:357.4px;width:39.2px;height:24px;background:#282828;border-radius:4.5px;border:1px solid #3d3d3d;box-sizing:border-box;"></div>
<svg style="left:1551.5px;top:360px" width="19" height="19" viewBox="0 0 19 19"><rect x=".8" y="2" width="17" height="6.4" rx="3.2" fill="#e6e6e6"/><rect x=".8" y="10.8" width="17" height="6.4" rx="3.2" fill="#e6e6e6"/><rect x="8.6" y="3.2" width="8" height="4" rx="2" fill="#282828"/><rect x="2" y="12" width="7" height="4" rx="2" fill="#282828" opacity="0"/><rect x="10.4" y="12" width="6.2" height="4" rx="2" fill="#282828"/></svg>
<svg style="left:1573.5px;top:366px" width="9" height="8" viewBox="0 0 9 8"><path d="M1.3 2.3L4.5 5.6L7.7 2.3" fill="none" stroke="#e6e6e6" stroke-linecap="round" stroke-linejoin="round" stroke-width="1.35"/></svg>
<div style="left:1620.5px;top:357.4px;width:143px;height:24px;background:#1d1d1d;border-radius:4.5px;border:1px solid #3d3d3d;box-sizing:border-box;"></div>
<svg style="left:1625px;top:360.5px" width="18" height="18" viewBox="0 0 18 18"><circle cx="11" cy="7" r="5.1" fill="none" stroke="#e6e6e6" stroke-width="1.3"/><path d="M7.4 10.8L1.8 16.4" stroke="#e6e6e6" stroke-width="1.5" stroke-linecap="round"/></svg>
<div style="left:1822.5px;top:357.4px;width:24px;height:24px;background:#282828;border-radius:4.5px;border:1px solid #3d3d3d;box-sizing:border-box;"></div>
<svg style="left:1830px;top:366px" width="9" height="8" viewBox="0 0 9 8"><path d="M1.3 2.3L4.5 5.6L7.7 2.3" fill="none" stroke="#e6e6e6" stroke-linecap="round" stroke-linejoin="round" stroke-width="1.35"/></svg>
<div style="left:1535.8px;top:384.7px;width:35px;height:636.5px;background:#191919;border-radius:0 0 0 5px;"></div>
<div style="left:1535.8px;top:384.7px;width:35px;height:45px;background:#1d1d1d;border-radius:0 0 0 6px;"></div>
<div style="left:1535.8px;top:433.3px;width:35px;height:181px;background:#1d1d1d;border-radius:6px 0 0 6px;"></div>
<div style="left:1535.8px;top:622px;width:35px;height:290px;background:#1d1d1d;border-radius:6px 0 0 6px;"></div>
<div style="left:1535.8px;top:918px;width:35px;height:38px;background:#1d1d1d;border-radius:6px 0 0 6px;"></div>
<div style="left:1538px;top:668.2px;width:33px;height:32.7px;background:#303030;border-radius:5px 0 0 5px;"></div>
<svg style="left:1545.7px;top:398px" width="18" height="18" viewBox="0 0 18 18"><path d="M3.6 1.4V9" stroke="#b4b4b4" stroke-width="1.5"/><rect x="1.4" y="10" width="4.6" height="7" rx="1.8" fill="#b4b4b4"/><path d="M13 8V16.2" stroke="#b4b4b4" stroke-width="2.6" stroke-linecap="round"/><path d="M10.2 1.6V5.6Q10.2 8.2 13 8.2Q15.8 8.2 15.8 5.6V1.6" fill="none" stroke="#b4b4b4" stroke-width="2"/></svg>
<svg style="left:1545.7px;top:447px" width="18" height="18" viewBox="0 0 18 18"><path d="M.8 5.4H17.2V16.4H.8Z" fill="#b4b4b4"/><path d="M5 5.4V2.4H12V5.4" fill="none" stroke="#b4b4b4" stroke-width="1.5"/><path d="M3 8H11.4V14.2H3Z" fill="#1d1d1d"/><path d="M3 9.6H11.4M3 11.2H11.4M3 12.8H11.4" stroke="#b4b4b4" stroke-width=".7"/><circle cx="14.4" cy="8.6" r="1.1" fill="#1d1d1d"/><circle cx="14.4" cy="13" r="1.1" fill="#1d1d1d"/></svg>
<svg style="left:1545.7px;top:482.5px" width="18" height="18" viewBox="0 0 18 18"><path d="M.8 1.4H17.2V8.6H15V6H3V8.6H.8Z" fill="#b4b4b4"/><path d="M3.6 7.4H14.4V17H3.6Z" fill="#b4b4b4"/><path d="M5.4 15.4L8.4 10.8L10 13L11 12L12.8 15.4Z" fill="#1d1d1d"/><circle cx="11.8" cy="10" r=".9" fill="#1d1d1d"/></svg>
<svg style="left:1545.7px;top:517.5px" width="18" height="18" viewBox="0 0 18 18"><rect x="5.2" y="1.2" width="10.6" height="10.6" rx="1.2" fill="none" stroke="#b4b4b4" stroke-width="1.2"/><path d="M6 11L9.4 5.6L11.6 8.6L12.8 7.4L15 11Z" fill="#b4b4b4"/><circle cx="13.2" cy="4" r="1" fill="#b4b4b4"/><path d="M3.2 3.6V13.8H13.4M1.2 5.8V15.8H11.2" fill="none" stroke="#b4b4b4" stroke-linecap="round" stroke-linejoin="round" stroke-width="1.1"/></svg>
<svg style="left:1545.7px;top:552.3px" width="18" height="18" viewBox="0 0 18 18"><path d="M5.2 1.5C6.6 4.5 8.6 8 8.8 10.6C8.8 13 1.4 13 1.4 10.6C1.6 8 3.8 4.5 5.2 1.5Z" fill="#b4b4b4"/><circle cx="11.6" cy="12" r="3.4" fill="#1d1d1d" stroke="#b4b4b4" stroke-width="1.3"/><circle cx="13.6" cy="4.3" r="2" fill="#b4b4b4"/></svg>
<svg style="left:1545.7px;top:587.6px" width="18" height="18" viewBox="0 0 18 18"><circle cx="9" cy="9.4" r="7.2" fill="none" stroke="#cc5f6b" stroke-width="1.4"/><path d="M5 5.4C6.6 4 8.4 4.4 9.4 5.6C10.4 7 9 8 8.2 9C9.6 9.6 10.4 11 9.2 13.4C7.6 13.4 7.4 11.4 5.6 10.4C4 9.4 3.6 7 5 5.4ZM11.4 6.6C12.6 6 14 6.8 14.4 8.4C13.4 9 11.8 8.4 11.4 6.6ZM11.4 11C12.6 10.6 13.8 11 13.6 12.4C12.8 13.6 11.4 13 11.4 11Z" fill="#cc5f6b"/><path d="M1.4 17L3.8 14.6M14.6 3.6L17 1.2" stroke="#cc5f6b" stroke-width="1.2"/></svg>
<svg style="left:1545.7px;top:631.7px" width="18" height="18" viewBox="0 0 18 18"><rect x=".8" y="1.6" width="16.4" height="3.4" fill="none" stroke="#b4b4b4" stroke-width="1.3"/><path d="M2.2 5.2V16.4H15.8V5.2" fill="none" stroke="#b4b4b4" stroke-width="1.3"/><rect x="6.4" y="8.2" width="5.2" height="2.2" rx="1.1" fill="#b4b4b4"/></svg>
<svg style="left:1545.7px;top:675.5px" width="18" height="18" viewBox="0 0 18 18"><rect x="4.6" y="4.6" width="8.8" height="8.8" fill="#e8995a"/><path d="M1 4.6V1H4.6M13.4 1H17V4.6M17 13.4V17H13.4M4.6 17H1V13.4" fill="none" stroke="#e8995a" stroke-linecap="butt" stroke-linejoin="miter" stroke-width="1.3"/></svg>
<svg style="left:1545.7px;top:710.3px" width="18" height="18" viewBox="0 0 18 18"><path d="M15.6 1.6L12.8 4.4L13.8 6.4L16.2 6.6L17.2 5.2C17.8 8 16 10.4 12.6 9.8L5 16.6C3.6 17.8 1.2 16 2.4 14.2L9.4 6.6C8.6 3.4 11.6 .4 15.6 1.6Z" fill="#5588dd"/></svg>
<svg style="left:1545.7px;top:745.4px" width="18" height="18" viewBox="0 0 18 18"><circle cx="3.6" cy="3.8" r="2.6" fill="#5588dd"/><circle cx="15.6" cy="5.2" r="1.5" fill="#5588dd"/><circle cx="3.4" cy="16" r="1.7" fill="#5588dd"/><circle cx="15" cy="15.4" r="2.4" fill="#5588dd"/><path d="M3.6 3.8L15.6 5.2M3.6 3.8L15 15.4M3.6 3.8L3.4 16" stroke="#5588dd" stroke-width="1.2"/></svg>
<svg style="left:1545.7px;top:780.7px" width="18" height="18" viewBox="0 0 18 18"><circle cx="8.6" cy="9.6" r="3.5" fill="#5588dd"/><path d="M14.2 5A7.6 7.6 0 1 0 15.6 13" fill="none" stroke="#5588dd" stroke-width="1.3" stroke-linecap="round"/><circle cx="15" cy="3" r="2" fill="#5588dd"/></svg>
<svg style="left:1545.7px;top:815.7px" width="18" height="18" viewBox="0 0 18 18"><path d="M10.6 2.4C13.2 .2 17.4 1.8 16.6 5.6C15.8 9.6 12.4 15.6 7.2 16.6C2.2 17.4 -.6 12.4 2.6 8.8C4.8 6.4 8.4 4.4 10.6 2.4Z" fill="none" stroke="#5588dd" stroke-width="1.3"/><circle cx="6.8" cy="11.6" r="3.3" fill="none" stroke="#5588dd" stroke-width="1.3"/><circle cx="6.8" cy="11.6" r="1.3" fill="#5588dd"/><circle cx="13.4" cy="4.8" r="1.3" fill="none" stroke="#5588dd" stroke-width="1"/></svg>
<svg style="left:1545.7px;top:850.5px" width="18" height="18" viewBox="0 0 18 18"><path d="M2.4 2.4H15.2L8.8 15.4Z" fill="none" stroke="#00d9a3" stroke-width="1.15"/><rect x=".7" y=".7" width="3.4" height="3.4" fill="#1d1d1d" stroke="#00d9a3" stroke-width="1.1"/><rect x="13.5" y=".7" width="3.4" height="3.4" fill="#1d1d1d" stroke="#00d9a3" stroke-width="1.1"/><rect x="7.1" y="13.7" width="3.4" height="3.4" fill="#1d1d1d" stroke="#00d9a3" stroke-width="1.1"/></svg>
<svg style="left:1545.7px;top:885.4px" width="18" height="18" viewBox="0 0 18 18"><circle cx="9" cy="9" r="7.4" fill="none" stroke="#cc5f6b" stroke-width="1.3"/><path d="M9 9V1.6A7.4 7.4 0 0 0 1.6 9ZM9 9H16.4A7.4 7.4 0 0 1 9 16.4Z" fill="#cc5f6b" transform="rotate(-12 9 9)"/></svg>
<svg style="left:1545.7px;top:929.6px" width="18" height="18" viewBox="0 0 18 18"><rect x="0.0" y="0.0" width="3.6" height="3.6" fill="#cc5f6b"/><rect x="0.0" y="7.2" width="3.6" height="3.6" fill="#cc5f6b"/><rect x="0.0" y="14.4" width="3.6" height="3.6" fill="#cc5f6b"/><rect x="3.6" y="3.6" width="3.6" height="3.6" fill="#cc5f6b"/><rect x="3.6" y="10.8" width="3.6" height="3.6" fill="#cc5f6b"/><rect x="7.2" y="0.0" width="3.6" height="3.6" fill="#cc5f6b"/><rect x="7.2" y="7.2" width="3.6" height="3.6" fill="#cc5f6b"/><rect x="7.2" y="14.4" width="3.6" height="3.6" fill="#cc5f6b"/><rect x="10.8" y="3.6" width="3.6" height="3.6" fill="#cc5f6b"/><rect x="10.8" y="10.8" width="3.6" height="3.6" fill="#cc5f6b"/><rect x="14.4" y="0.0" width="3.6" height="3.6" fill="#cc5f6b"/><rect x="14.4" y="7.2" width="3.6" height="3.6" fill="#cc5f6b"/><rect x="14.4" y="14.4" width="3.6" height="3.6" fill="#cc5f6b"/><rect x=".5" y=".5" width="17" height="17" fill="none" stroke="#cc5f6b" stroke-width="1"/></svg>
<svg style="left:1584.7px;top:398.9px" width="17.7" height="17.2" viewBox="0 0 18 18"><rect x="4.4" y="4.4" width="9.2" height="9.2" fill="#e6e6e6"/><path d="M1 4.6V1H4.6M13.4 1H17V4.6M17 13.4V17H13.4M4.6 17H1V13.4" fill="none" stroke="#adadad" stroke-width="1.3"/></svg>
<div style="left:1613.3px;top:397px;line-height:20px;height:20px;color:#e6e6e6;white-space:pre;opacity:.999;">obj_9</div>
<svg style="left:1828px;top:398px" width="17.5" height="18" viewBox="0 0 18 18"><path d="M10.6 2.2L15.8 7.4L13.9 8L11.4 10.5L11.3 13.6L4.4 6.7L7.5 6.6L10 4.1Z M7.8 10.2L2.2 15.8" fill="none" stroke="#b8b8b8" stroke-linecap="round" stroke-linejoin="round" stroke-width="1.2"/></svg>
<div style="left:1581.7px;top:440.7px;width:39.5px;height:23.8px;background:#282828;border-radius:4.5px 0 0 4.5px;border:1px solid #3d3d3d;box-sizing:border-box;"></div>
<svg style="left:1586.8px;top:444px" width="17.5" height="17" viewBox="0 0 18 18"><rect x="4.4" y="4.4" width="9.2" height="9.2" fill="#e6e6e6"/><path d="M1 4.6V1H4.6M13.4 1H17V4.6M17 13.4V17H13.4M4.6 17H1V13.4" fill="none" stroke="#adadad" stroke-width="1.3"/></svg>
<svg style="left:1608.3px;top:449.5px" width="9" height="8" viewBox="0 0 9 8"><path d="M1.3 2.3L4.5 5.6L7.7 2.3" fill="none" stroke="#e6e6e6" stroke-linecap="round" stroke-linejoin="round" stroke-width="1.35"/></svg>
<div style="left:1620.2px;top:440.7px;width:227px;height:23.8px;background:#1d1d1d;border-radius:0 4.5px 4.5px 0;border:1px solid #3d3d3d;box-sizing:border-box;"></div>
<div style="left:1630.3px;top:442px;line-height:20px;height:20px;color:#e6e6e6;white-space:pre;opacity:.999;">obj_9</div>
<div style="left:1581.2px;top:477px;width:266.79999999999995px;height:349.79999999999995px;background:#3d3d3d;border-radius:5px;"></div>
<svg style="left:1591px;top:489.3px" width="11" height="7.5" viewBox="0 0 11 7.5"><path d="M1 1.2L5.5 6L10 1.2" fill="none" stroke="#e6e6e6" stroke-linecap="round" stroke-linejoin="round" stroke-width="1.3"/></svg>
<div style="left:1608.9px;top:483px;line-height:20px;height:20px;color:#e6e6e6;white-space:pre;opacity:.999;">Transformieren</div>
<svg style="left:1824.8px;top:489.2px" width="15" height="7"><rect x="0.0" y="0.0" width="2.2" height="2.2" fill="#8c8c8c"/><rect x="0.0" y="4.4" width="2.2" height="2.2" fill="#8c8c8c"/><rect x="4.2" y="0.0" width="2.2" height="2.2" fill="#8c8c8c"/><rect x="4.2" y="4.4" width="2.2" height="2.2" fill="#8c8c8c"/><rect x="8.4" y="0.0" width="2.2" height="2.2" fill="#8c8c8c"/><rect x="8.4" y="4.4" width="2.2" height="2.2" fill="#8c8c8c"/><rect x="12.6" y="0.0" width="2.2" height="2.2" fill="#8c8c8c"/><rect x="12.6" y="4.4" width="2.2" height="2.2" fill="#8c8c8c"/></svg>
<div style="left:1686px;top:519px;width:101px;height:23.3px;background:#545454;border-radius:4px 4px 0 0;"></div>
<div style="left:1586.3px;width:300px;text-align:center;top:520px;line-height:20px;height:20px;color:#e6e6e6;white-space:pre;opacity:.999;">0 m</div>
<div style="left:1373.7px;width:300px;text-align:right;top:520px;line-height:20px;height:20px;color:#e6e6e6;white-space:pre;opacity:.999;">Position X</div>
<svg style="left:1791.3px;top:522.15px" width="18" height="17" viewBox="0 0 18 17"><rect x="6.6" y="8.4" width="10.6" height="7.6" rx=".8" fill="none" stroke="#d0d0d0" stroke-width="1.25"/><path d="M1 6.6V5A3.3 3.3 0 0 1 7.6 5V8.2" fill="none" stroke="#d0d0d0" stroke-width="1.25"/><rect x="10.4" y="11.2" width="3" height="2.2" fill="#d0d0d0"/></svg>
<div style="left:1822.6px;top:527.9px;width:5.6px;height:5.6px;border-radius:50%;background:#e6e6e6"></div>
<div style="left:1686px;top:543.5px;width:101px;height:23.4px;background:#545454;border-radius:0;"></div>
<div style="left:1586.3px;width:300px;text-align:center;top:545px;line-height:20px;height:20px;color:#e6e6e6;white-space:pre;opacity:.999;">0 m</div>
<div style="left:1373.7px;width:300px;text-align:right;top:545px;line-height:20px;height:20px;color:#e6e6e6;white-space:pre;opacity:.999;">Y</div>
<svg style="left:1791.3px;top:546.7px" width="18" height="17" viewBox="0 0 18 17"><rect x="6.6" y="8.4" width="10.6" height="7.6" rx=".8" fill="none" stroke="#d0d0d0" stroke-width="1.25"/><path d="M1 6.6V5A3.3 3.3 0 0 1 7.6 5V8.2" fill="none" stroke="#d0d0d0" stroke-width="1.25"/><rect x="10.4" y="11.2" width="3" height="2.2" fill="#d0d0d0"/></svg>
<div style="left:1822.6px;top:552.5px;width:5.6px;height:5.6px;border-radius:50%;background:#e6e6e6"></div>
<div style="left:1686px;top:568px;width:101px;height:24.2px;background:#545454;border-radius:0 0 4px 4px;"></div>
<div style="left:1586.3px;width:300px;text-align:center;top:570px;line-height:20px;height:20px;color:#e6e6e6;white-space:pre;opacity:.999;">-21.228 m</div>
<div style="left:1373.7px;width:300px;text-align:right;top:570px;line-height:20px;height:20px;color:#e6e6e6;white-space:pre;opacity:.999;">Z</div>
<svg style="left:1791.3px;top:571.6px" width="18" height="17" viewBox="0 0 18 17"><rect x="6.6" y="8.4" width="10.6" height="7.6" rx=".8" fill="none" stroke="#d0d0d0" stroke-width="1.25"/><path d="M1 6.6V5A3.3 3.3 0 0 1 7.6 5V8.2" fill="none" stroke="#d0d0d0" stroke-width="1.25"/><rect x="10.4" y="11.2" width="3" height="2.2" fill="#d0d0d0"/></svg>
<div style="left:1822.6px;top:577.4px;width:5.6px;height:5.6px;border-radius:50%;background:#e6e6e6"></div>
<div style="left:1686px;top:600.2px;width:101px;height:23.4px;background:#545454;border-radius:4px 4px 0 0;"></div>
<div style="left:1586.3px;width:300px;text-align:center;top:601px;line-height:20px;height:20px;color:#e6e6e6;white-space:pre;opacity:.999;">90°</div>
<div style="left:1373.7px;width:300px;text-align:right;top:601px;line-height:20px;height:20px;color:#e6e6e6;white-space:pre;opacity:.999;">Rotation X</div>
<svg style="left:1791.3px;top:603.4000000000001px" width="18" height="17" viewBox="0 0 18 17"><rect x="6.6" y="8.4" width="10.6" height="7.6" rx=".8" fill="none" stroke="#d0d0d0" stroke-width="1.25"/><path d="M1 6.6V5A3.3 3.3 0 0 1 7.6 5V8.2" fill="none" stroke="#d0d0d0" stroke-width="1.25"/><rect x="10.4" y="11.2" width="3" height="2.2" fill="#d0d0d0"/></svg>
<div style="left:1822.6px;top:609.2px;width:5.6px;height:5.6px;border-radius:50%;background:#e6e6e6"></div>
<div style="left:1686px;top:624.7px;width:101px;height:23.4px;background:#545454;border-radius:0;"></div>
<div style="left:1586.3px;width:300px;text-align:center;top:626px;line-height:20px;height:20px;color:#e6e6e6;white-space:pre;opacity:.999;">0°</div>
<div style="left:1373.7px;width:300px;text-align:right;top:626px;line-height:20px;height:20px;color:#e6e6e6;white-space:pre;opacity:.999;">Y</div>
<svg style="left:1791.3px;top:627.9000000000001px" width="18" height="17" viewBox="0 0 18 17"><rect x="6.6" y="8.4" width="10.6" height="7.6" rx=".8" fill="none" stroke="#d0d0d0" stroke-width="1.25"/><path d="M1 6.6V5A3.3 3.3 0 0 1 7.6 5V8.2" fill="none" stroke="#d0d0d0" stroke-width="1.25"/><rect x="10.4" y="11.2" width="3" height="2.2" fill="#d0d0d0"/></svg>
<div style="left:1822.6px;top:633.7px;width:5.6px;height:5.6px;border-radius:50%;background:#e6e6e6"></div>
<div style="left:1686px;top:649.2px;width:101px;height:23.8px;background:#545454;border-radius:0 0 4px 4px;"></div>
<div style="left:1586.3px;width:300px;text-align:center;top:651px;line-height:20px;height:20px;color:#e6e6e6;white-space:pre;opacity:.999;">0°</div>
<div style="left:1373.7px;width:300px;text-align:right;top:651px;line-height:20px;height:20px;color:#e6e6e6;white-space:pre;opacity:.999;">Z</div>
<svg style="left:1791.3px;top:652.6px" width="18" height="17" viewBox="0 0 18 17"><rect x="6.6" y="8.4" width="10.6" height="7.6" rx=".8" fill="none" stroke="#d0d0d0" stroke-width="1.25"/><path d="M1 6.6V5A3.3 3.3 0 0 1 7.6 5V8.2" fill="none" stroke="#d0d0d0" stroke-width="1.25"/><rect x="10.4" y="11.2" width="3" height="2.2" fill="#d0d0d0"/></svg>
<div style="left:1822.6px;top:658.4px;width:5.6px;height:5.6px;border-radius:50%;background:#e6e6e6"></div>
<div style="left:1686px;top:681px;width:101px;height:22.5px;background:#282828;border-radius:4.5px;border:1px solid #3d3d3d;box-sizing:border-box;"></div>
<div style="left:1695px;top:682px;line-height:20px;height:20px;color:#e6e6e6;white-space:pre;opacity:.999;">XYZ Euler</div>
<svg style="left:1775px;top:688.5px" width="9" height="8" viewBox="0 0 9 8"><path d="M1.3 2.3L4.5 5.6L7.7 2.3" fill="none" stroke="#e6e6e6" stroke-linecap="round" stroke-linejoin="round" stroke-width="1.35"/></svg>
<div style="left:1373.7px;width:300px;text-align:right;top:682px;line-height:20px;height:20px;color:#e6e6e6;white-space:pre;opacity:.999;">Modus</div>
<div style="left:1822.6px;top:689.5px;width:5.6px;height:5.6px;border-radius:50%;background:#e6e6e6"></div>
<div style="left:1686px;top:712.4px;width:101px;height:23.3px;background:#545454;border-radius:4px 4px 0 0;"></div>
<div style="left:1586.3px;width:300px;text-align:center;top:713px;line-height:20px;height:20px;color:#e6e6e6;white-space:pre;opacity:.999;">1.000</div>
<div style="left:1373.7px;width:300px;text-align:right;top:713px;line-height:20px;height:20px;color:#e6e6e6;white-space:pre;opacity:.999;">Skalieren X</div>
<svg style="left:1791.3px;top:715.55px" width="18" height="17" viewBox="0 0 18 17"><rect x="6.6" y="8.4" width="10.6" height="7.6" rx=".8" fill="none" stroke="#d0d0d0" stroke-width="1.25"/><path d="M1 6.6V5A3.3 3.3 0 0 1 7.6 5V8.2" fill="none" stroke="#d0d0d0" stroke-width="1.25"/><rect x="10.4" y="11.2" width="3" height="2.2" fill="#d0d0d0"/></svg>
<div style="left:1822.6px;top:721.3px;width:5.6px;height:5.6px;border-radius:50%;background:#e6e6e6"></div>
<div style="left:1686px;top:736.8px;width:101px;height:23.4px;background:#545454;border-radius:0;"></div>
<div style="left:1586.3px;width:300px;text-align:center;top:738px;line-height:20px;height:20px;color:#e6e6e6;white-space:pre;opacity:.999;">1.000</div>
<div style="left:1373.7px;width:300px;text-align:right;top:738px;line-height:20px;height:20px;color:#e6e6e6;white-space:pre;opacity:.999;">Y</div>
<svg style="left:1791.3px;top:740.0px" width="18" height="17" viewBox="0 0 18 17"><rect x="6.6" y="8.4" width="10.6" height="7.6" rx=".8" fill="none" stroke="#d0d0d0" stroke-width="1.25"/><path d="M1 6.6V5A3.3 3.3 0 0 1 7.6 5V8.2" fill="none" stroke="#d0d0d0" stroke-width="1.25"/><rect x="10.4" y="11.2" width="3" height="2.2" fill="#d0d0d0"/></svg>
<div style="left:1822.6px;top:745.8px;width:5.6px;height:5.6px;border-radius:50%;background:#e6e6e6"></div>
<div style="left:1686px;top:761.3px;width:101px;height:23.9px;background:#545454;border-radius:0 0 4px 4px;"></div>
<div style="left:1586.3px;width:300px;text-align:center;top:763px;line-height:20px;height:20px;color:#e6e6e6;white-space:pre;opacity:.999;">1.000</div>
<div style="left:1373.7px;width:300px;text-align:right;top:763px;line-height:20px;height:20px;color:#e6e6e6;white-space:pre;opacity:.999;">Z</div>
<svg style="left:1791.3px;top:764.75px" width="18" height="17" viewBox="0 0 18 17"><rect x="6.6" y="8.4" width="10.6" height="7.6" rx=".8" fill="none" stroke="#d0d0d0" stroke-width="1.25"/><path d="M1 6.6V5A3.3 3.3 0 0 1 7.6 5V8.2" fill="none" stroke="#d0d0d0" stroke-width="1.25"/><rect x="10.4" y="11.2" width="3" height="2.2" fill="#d0d0d0"/></svg>
<div style="left:1822.6px;top:770.5px;width:5.6px;height:5.6px;border-radius:50%;background:#e6e6e6"></div>
<svg style="left:1611.6px;top:805.5px" width="6.5" height="11" viewBox="0 0 6.5 11"><path d="M1 1L5.5 5.5L1 10" fill="none" stroke="#e6e6e6" stroke-linecap="round" stroke-linejoin="round" stroke-width="1.3"/></svg>
<div style="left:1625.3px;top:802px;line-height:20px;height:20px;color:#e6e6e6;white-space:pre;opacity:.999;">Delta-Transformation</div>
<div style="left:1581.2px;top:829.1px;width:266.79999999999995px;height:31px;background:#3d3d3d;border-radius:5px;"></div>
<svg style="left:1594.8px;top:839.1px" width="6.5" height="11" viewBox="0 0 6.5 11"><path d="M1 1L5.5 5.5L1 10" fill="none" stroke="#e6e6e6" stroke-linecap="round" stroke-linejoin="round" stroke-width="1.3"/></svg>
<div style="left:1608.6px;top:835px;line-height:20px;height:20px;color:#e6e6e6;white-space:pre;opacity:.999;">Beziehungen</div>
<svg style="left:1824.8px;top:841.3000000000001px" width="15" height="7"><rect x="0.0" y="0.0" width="2.2" height="2.2" fill="#8c8c8c"/><rect x="0.0" y="4.4" width="2.2" height="2.2" fill="#8c8c8c"/><rect x="4.2" y="0.0" width="2.2" height="2.2" fill="#8c8c8c"/><rect x="4.2" y="4.4" width="2.2" height="2.2" fill="#8c8c8c"/><rect x="8.4" y="0.0" width="2.2" height="2.2" fill="#8c8c8c"/><rect x="8.4" y="4.4" width="2.2" height="2.2" fill="#8c8c8c"/><rect x="12.6" y="0.0" width="2.2" height="2.2" fill="#8c8c8c"/><rect x="12.6" y="4.4" width="2.2" height="2.2" fill="#8c8c8c"/></svg>
<div style="left:1581.2px;top:862.15px;width:266.79999999999995px;height:31px;background:#3d3d3d;border-radius:5px;"></div>
<svg style="left:1594.8px;top:872.15px" width="6.5" height="11" viewBox="0 0 6.5 11"><path d="M1 1L5.5 5.5L1 10" fill="none" stroke="#e6e6e6" stroke-linecap="round" stroke-linejoin="round" stroke-width="1.3"/></svg>
<div style="left:1608.6px;top:868px;line-height:20px;height:20px;color:#e6e6e6;white-space:pre;opacity:.999;">Sammlungen</div>
<svg style="left:1824.8px;top:874.35px" width="15" height="7"><rect x="0.0" y="0.0" width="2.2" height="2.2" fill="#8c8c8c"/><rect x="0.0" y="4.4" width="2.2" height="2.2" fill="#8c8c8c"/><rect x="4.2" y="0.0" width="2.2" height="2.2" fill="#8c8c8c"/><rect x="4.2" y="4.4" width="2.2" height="2.2" fill="#8c8c8c"/><rect x="8.4" y="0.0" width="2.2" height="2.2" fill="#8c8c8c"/><rect x="8.4" y="4.4" width="2.2" height="2.2" fill="#8c8c8c"/><rect x="12.6" y="0.0" width="2.2" height="2.2" fill="#8c8c8c"/><rect x="12.6" y="4.4" width="2.2" height="2.2" fill="#8c8c8c"/></svg>
<div style="left:1581.2px;top:895.2px;width:266.79999999999995px;height:31px;background:#3d3d3d;border-radius:5px;"></div>
<svg style="left:1594.8px;top:905.2px" width="6.5" height="11" viewBox="0 0 6.5 11"><path d="M1 1L5.5 5.5L1 10" fill="none" stroke="#e6e6e6" stroke-linecap="round" stroke-linejoin="round" stroke-width="1.3"/></svg>
<div style="left:1608.6px;top:901px;line-height:20px;height:20px;color:#e6e6e6;white-space:pre;opacity:.999;">Instancing</div>
<svg style="left:1824.8px;top:907.4000000000001px" width="15" height="7"><rect x="0.0" y="0.0" width="2.2" height="2.2" fill="#8c8c8c"/><rect x="0.0" y="4.4" width="2.2" height="2.2" fill="#8c8c8c"/><rect x="4.2" y="0.0" width="2.2" height="2.2" fill="#8c8c8c"/><rect x="4.2" y="4.4" width="2.2" height="2.2" fill="#8c8c8c"/><rect x="8.4" y="0.0" width="2.2" height="2.2" fill="#8c8c8c"/><rect x="8.4" y="4.4" width="2.2" height="2.2" fill="#8c8c8c"/><rect x="12.6" y="0.0" width="2.2" height="2.2" fill="#8c8c8c"/><rect x="12.6" y="4.4" width="2.2" height="2.2" fill="#8c8c8c"/></svg>
<div style="left:1581.2px;top:928.25px;width:266.79999999999995px;height:31px;background:#3d3d3d;border-radius:5px;"></div>
<svg style="left:1594.8px;top:938.25px" width="6.5" height="11" viewBox="0 0 6.5 11"><path d="M1 1L5.5 5.5L1 10" fill="none" stroke="#e6e6e6" stroke-linecap="round" stroke-linejoin="round" stroke-width="1.3"/></svg>
<div style="left:1608.6px;top:934px;line-height:20px;height:20px;color:#e6e6e6;white-space:pre;opacity:.999;">Bewegungspfade</div>
<svg style="left:1824.8px;top:940.45px" width="15" height="7"><rect x="0.0" y="0.0" width="2.2" height="2.2" fill="#8c8c8c"/><rect x="0.0" y="4.4" width="2.2" height="2.2" fill="#8c8c8c"/><rect x="4.2" y="0.0" width="2.2" height="2.2" fill="#8c8c8c"/><rect x="4.2" y="4.4" width="2.2" height="2.2" fill="#8c8c8c"/><rect x="8.4" y="0.0" width="2.2" height="2.2" fill="#8c8c8c"/><rect x="8.4" y="4.4" width="2.2" height="2.2" fill="#8c8c8c"/><rect x="12.6" y="0.0" width="2.2" height="2.2" fill="#8c8c8c"/><rect x="12.6" y="4.4" width="2.2" height="2.2" fill="#8c8c8c"/></svg>
<div style="left:1581.2px;top:961.3px;width:266.79999999999995px;height:31px;background:#3d3d3d;border-radius:5px;"></div>
<svg style="left:1594.8px;top:971.3px" width="6.5" height="11" viewBox="0 0 6.5 11"><path d="M1 1L5.5 5.5L1 10" fill="none" stroke="#e6e6e6" stroke-linecap="round" stroke-linejoin="round" stroke-width="1.3"/></svg>
<div style="left:1608.6px;top:967px;line-height:20px;height:20px;color:#e6e6e6;white-space:pre;opacity:.999;">Sichtbarkeit</div>
<svg style="left:1824.8px;top:973.5px" width="15" height="7"><rect x="0.0" y="0.0" width="2.2" height="2.2" fill="#8c8c8c"/><rect x="0.0" y="4.4" width="2.2" height="2.2" fill="#8c8c8c"/><rect x="4.2" y="0.0" width="2.2" height="2.2" fill="#8c8c8c"/><rect x="4.2" y="4.4" width="2.2" height="2.2" fill="#8c8c8c"/><rect x="8.4" y="0.0" width="2.2" height="2.2" fill="#8c8c8c"/><rect x="8.4" y="4.4" width="2.2" height="2.2" fill="#8c8c8c"/><rect x="12.6" y="0.0" width="2.2" height="2.2" fill="#8c8c8c"/><rect x="12.6" y="4.4" width="2.2" height="2.2" fill="#8c8c8c"/></svg>
<div style="left:1581.2px;top:994.35px;width:266.79999999999995px;height:26.850000000000023px;background:#3d3d3d;border-radius:5px 5px 0 0;"></div>
<svg style="left:1594.8px;top:1004.35px" width="6.5" height="11" viewBox="0 0 6.5 11"><path d="M1 1L5.5 5.5L1 10" fill="none" stroke="#e6e6e6" stroke-linecap="round" stroke-linejoin="round" stroke-width="1.3"/></svg>
<div style="left:1608.6px;top:1000px;line-height:20px;height:20px;color:#e6e6e6;white-space:pre;opacity:.999;">Ansichtsfenster-Anzeige</div>
<svg style="left:1824.8px;top:1006.5500000000001px" width="15" height="7"><rect x="0.0" y="0.0" width="2.2" height="2.2" fill="#8c8c8c"/><rect x="0.0" y="4.4" width="2.2" height="2.2" fill="#8c8c8c"/><rect x="4.2" y="0.0" width="2.2" height="2.2" fill="#8c8c8c"/><rect x="4.2" y="4.4" width="2.2" height="2.2" fill="#8c8c8c"/><rect x="8.4" y="0.0" width="2.2" height="2.2" fill="#8c8c8c"/><rect x="8.4" y="4.4" width="2.2" height="2.2" fill="#8c8c8c"/><rect x="12.6" y="0.0" width="2.2" height="2.2" fill="#8c8c8c"/><rect x="12.6" y="4.4" width="2.2" height="2.2" fill="#8c8c8c"/></svg>
<div style="left:1851.3px;top:397px;width:3.6px;height:553px;background:#4f4f4f;border-radius:1.8px;"></div>
</body></html>
